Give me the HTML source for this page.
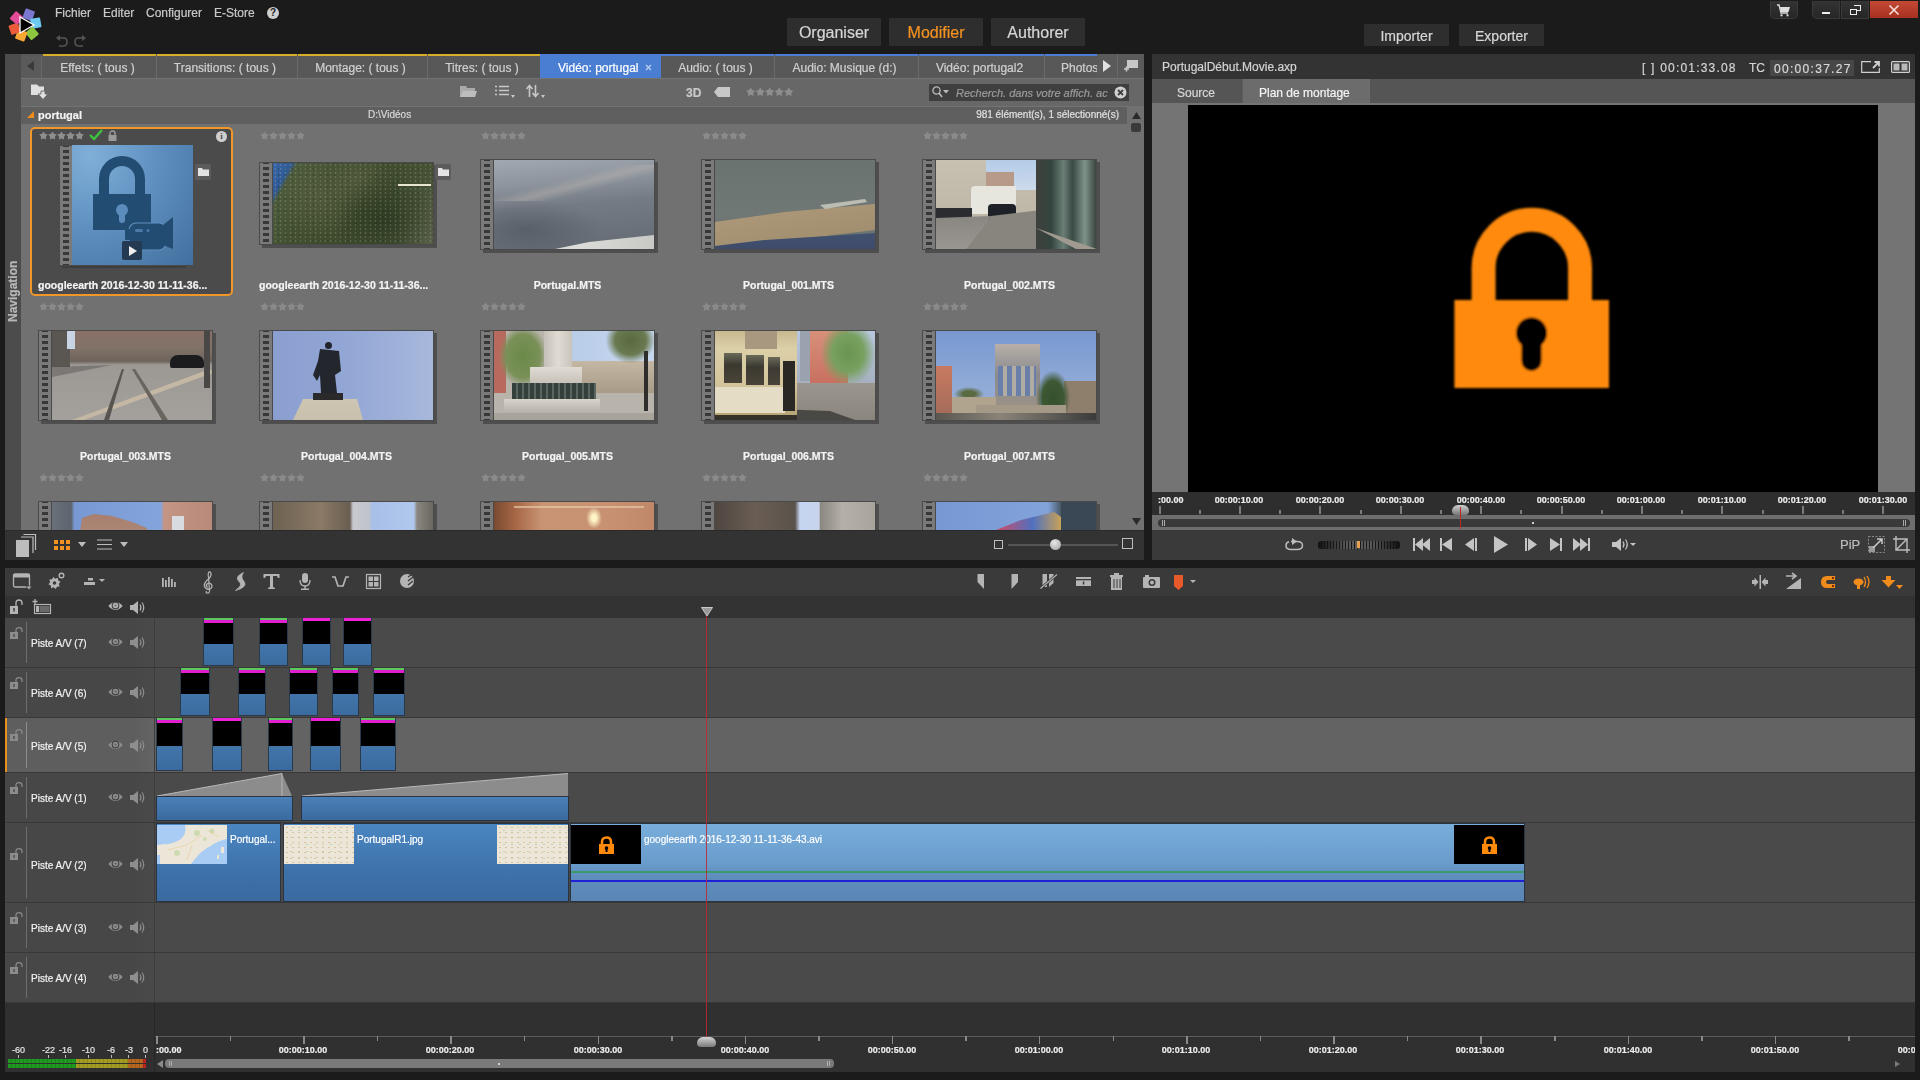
<!DOCTYPE html><html><head><meta charset="utf-8"><style>
*{margin:0;padding:0;box-sizing:border-box}
html,body{width:1920px;height:1080px;overflow:hidden;background:#1b1b1b;font-family:"Liberation Sans",sans-serif;}
div{position:absolute}
.t{white-space:nowrap;line-height:1;will-change:transform;-webkit-text-stroke:0.2px currentColor}
svg{position:absolute;overflow:visible}
</style></head><body>

<div style="left:0px;top:0px;width:1920px;height:54px;background:#1b1b1b"></div>
<svg style="left:0;top:0" width="60" height="54" viewBox="0 0 60 54">
<g transform="translate(25,25)">
<rect x="-5" y="-16" width="10" height="10" rx="1" fill="#7a78d0" transform="rotate(20)"/>
<rect x="-5" y="-16" width="10" height="10" rx="1" fill="#6ccaf0" transform="rotate(80)"/>
<rect x="-5" y="-16" width="10" height="10" rx="1" fill="#8cc63e" transform="rotate(140)"/>
<rect x="-5" y="-16" width="10" height="10" rx="1" fill="#f7a733" transform="rotate(200)"/>
<rect x="-5" y="-16" width="10" height="10" rx="1" fill="#ec5b3a" transform="rotate(250)"/>
<rect x="-5" y="-16" width="10" height="10" rx="1" fill="#e44c9a" transform="rotate(310)"/>
<path d="M-5,-8 L9,0 L-5,8 Z" fill="#000" stroke="#fff" stroke-width="1.3"/>
</g></svg>
<div class="t" style="left:55px;top:7px;font-size:12px;color:#c9c9c9">Fichier</div>
<div class="t" style="left:103px;top:7px;font-size:12px;color:#c9c9c9">Editer</div>
<div class="t" style="left:146px;top:7px;font-size:12px;color:#c9c9c9">Configurer</div>
<div class="t" style="left:214px;top:7px;font-size:12px;color:#c9c9c9">E-Store</div>
<div style="left:267px;top:7px;width:12px;height:12px;border-radius:6px;background:#d0d0d0;color:#1b1b1b;font-size:10px;font-weight:bold;text-align:center;line-height:12px">?</div>
<svg style="left:55px;top:34px" width="32" height="14" viewBox="0 0 32 14">
<path d="M3,4 L9,4 Q12,4 12,8 Q12,12 8,12 L4,12" fill="none" stroke="#555" stroke-width="1.6"/>
<path d="M1,4 L5,1 L5,7 Z" fill="#555"/>
<path d="M29,4 L23,4 Q20,4 20,8 Q20,12 24,12 L28,12" fill="none" stroke="#555" stroke-width="1.6"/>
<path d="M31,4 L27,1 L27,7 Z" fill="#555"/>
</svg>
<div style="left:787px;top:18px;width:94px;height:28px;background:#2e2e2e;border-radius:1px"></div><div class="t" style="left:787px;top:25px;width:94px;color:#d6d6d6;font-size:16px;text-align:center">Organiser</div>
<div style="left:889px;top:18px;width:94px;height:28px;background:#2e2e2e;border-radius:1px"></div><div class="t" style="left:889px;top:25px;width:94px;color:#f39220;font-size:16px;text-align:center">Modifier</div>
<div style="left:991px;top:18px;width:94px;height:28px;background:#2e2e2e;border-radius:1px"></div><div class="t" style="left:991px;top:25px;width:94px;color:#d6d6d6;font-size:16px;text-align:center">Authorer</div>
<div style="left:1364px;top:24px;width:85px;height:22px;background:#2e2e2e;border-radius:1px"></div><div class="t" style="left:1364px;top:29px;width:85px;color:#d6d6d6;font-size:14px;text-align:center">Importer</div>
<div style="left:1459px;top:24px;width:85px;height:22px;background:#2e2e2e;border-radius:1px"></div><div class="t" style="left:1459px;top:29px;width:85px;color:#d6d6d6;font-size:14px;text-align:center">Exporter</div>
<div style="left:1770px;top:1px;width:28px;height:18px;background:linear-gradient(#343434,#262626);border-radius:0 0 5px 5px;border:1px solid #3a3a3a;border-top:none"></div>
<svg style="left:1776px;top:4px" width="16" height="13" viewBox="0 0 16 13"><path d="M1,1 L3,1 L5,9 L12,9" fill="none" stroke="#ddd" stroke-width="1.3"/><path d="M4,3 L14,3 L12.5,8 L5,8Z" fill="#ddd"/><rect x="4.5" y="10.3" width="2" height="2" fill="#ddd"/><rect x="10.5" y="10.3" width="2" height="2" fill="#ddd"/></svg>
<div style="left:1812px;top:1px;width:28px;height:18px;background:linear-gradient(#343434,#262626);border-radius:0 0 0 5px;border:1px solid #3a3a3a;border-top:none"></div>
<div style="left:1822px;top:12px;width:8px;height:2px;background:#eee"></div>
<div style="left:1841px;top:1px;width:28px;height:18px;background:linear-gradient(#343434,#262626);border:1px solid #3a3a3a;border-top:none"></div>
<div style="left:1850px;top:9px;width:7px;height:6px;border:1.2px solid #eee;"></div><div style="left:1854px;top:5px;width:7px;height:6px;border:1.2px solid #eee;border-left:none;border-bottom:none"></div><div style="left:1857px;top:9px;width:4px;height:2px;border-right:1.2px solid #eee;border-bottom:1.2px solid #eee"></div>
<div style="left:1870px;top:1px;width:48px;height:17px;background:linear-gradient(#c44a36,#a8301f);"></div>
<svg style="left:1889px;top:5px" width="10" height="10" viewBox="0 0 10 10"><path d="M0.5,0.5 L9.5,9.5 M9.5,0.5 L0.5,9.5" stroke="#f4e4e0" stroke-width="1.5"/></svg>
<div style="left:5px;top:54px;width:1139px;height:476px;background:#717171"></div>
<div style="left:5px;top:54px;width:16px;height:476px;background:#4c4c4c"></div>
<div style="left:5px;top:322px;width:16px;height:0;"><div class="t" style="left:2px;top:0;transform:rotate(-90deg);transform-origin:0 0;font-size:12px;font-weight:bold;color:#b8b8b8">Navigation</div></div>
<div style="left:21px;top:54px;width:1123px;height:24px;background:#585858"></div>
<div style="left:21px;top:56px;width:21px;height:22px;background:#5a5a5a;border-right:1px solid #6a6a6a"></div>
<svg style="left:27px;top:61px" width="8" height="10"><path d="M7,0 L0,5 L7,10Z" fill="#3a3a3a"/></svg>
<div style="left:43px;top:54px;width:113px;height:2px;background:#d6ae2a"></div>
<div style="left:156px;top:56px;width:1px;height:22px;background:#6a6a6a"></div>
<div class="t" style="left:41px;top:62px;width:113px;text-align:center;font-size:12px;color:#d0d0d0">Effets: ( tous )</div>
<div style="left:157px;top:54px;width:140px;height:2px;background:#d6ae2a"></div>
<div style="left:297px;top:56px;width:1px;height:22px;background:#6a6a6a"></div>
<div class="t" style="left:155px;top:62px;width:140px;text-align:center;font-size:12px;color:#d0d0d0">Transitions: ( tous )</div>
<div style="left:298px;top:54px;width:129px;height:2px;background:#d6ae2a"></div>
<div style="left:427px;top:56px;width:1px;height:22px;background:#6a6a6a"></div>
<div class="t" style="left:296px;top:62px;width:129px;text-align:center;font-size:12px;color:#d0d0d0">Montage: ( tous )</div>
<div style="left:428px;top:54px;width:112px;height:2px;background:#d6ae2a"></div>
<div style="left:540px;top:56px;width:1px;height:22px;background:#6a6a6a"></div>
<div class="t" style="left:426px;top:62px;width:112px;text-align:center;font-size:12px;color:#d0d0d0">Titres: ( tous )</div>
<div style="left:540px;top:54px;width:121px;height:24px;background:#4a7ed2"></div>
<div class="t" style="left:558px;top:62px;font-size:12px;color:#fff">Vidéo: portugal</div>
<svg style="left:645px;top:64px" width="7" height="7"><path d="M1,1 L6,6 M6,1 L1,6" stroke="#b8ccf0" stroke-width="1.4"/></svg>
<div style="left:661px;top:54px;width:113px;height:2px;background:#4a7ed2"></div>
<div style="left:774px;top:56px;width:1px;height:22px;background:#6a6a6a"></div>
<div class="t" style="left:659px;top:62px;width:113px;text-align:center;font-size:12px;color:#d0d0d0">Audio: ( tous )</div>
<div style="left:775px;top:54px;width:143px;height:2px;background:#4a7ed2"></div>
<div style="left:918px;top:56px;width:1px;height:22px;background:#6a6a6a"></div>
<div class="t" style="left:773px;top:62px;width:143px;text-align:center;font-size:12px;color:#d0d0d0">Audio: Musique (d:)</div>
<div style="left:919px;top:54px;width:125px;height:2px;background:#4a7ed2"></div>
<div style="left:1044px;top:56px;width:1px;height:22px;background:#6a6a6a"></div>
<div class="t" style="left:917px;top:62px;width:125px;text-align:center;font-size:12px;color:#d0d0d0">Vidéo: portugal2</div>
<div style="left:1045px;top:54px;width:52px;height:2px;background:#4a7ed2"></div>
<div style="left:1045px;top:56px;width:52px;height:22px;overflow:hidden"><div class="t" style="left:16px;top:6px;font-size:12px;color:#d0d0d0">Photos</div></div>
<div style="left:1097px;top:54px;width:21px;height:24px;background:#5a5a5a;border-right:1px solid #6a6a6a"></div>
<svg style="left:1103px;top:60px" width="8" height="12"><path d="M0,0 L8,6 L0,12Z" fill="#e0e0e0"/></svg>
<div style="left:1119px;top:54px;width:25px;height:24px;background:#5a5a5a"></div>
<svg style="left:1123px;top:59px" width="16" height="14"><rect x="4" y="1" width="11" height="8" fill="#c8c8c8"/><path d="M1,10 L6,10 M3.5,7.5 L3.5,12.5" stroke="#c8c8c8" stroke-width="1.6"/></svg>
<div style="left:21px;top:78px;width:1123px;height:28px;background:#676767;border-top:1px solid #747474"></div>
<svg style="left:31px;top:84px" width="20" height="17"><path d="M0,0.5 L6,0.5 L8,2.5 L13,2.5 L13,11 L0,11Z" fill="#e0e0e0"/><path d="M10,7 L14,7 L14,10 L17,10 L12,15.5 L7,10 L10,10Z" fill="#e0e0e0" stroke="#676767" stroke-width="0.9"/></svg>
<svg style="left:460px;top:85px" width="17" height="13"><path d="M0,1 L6,1 L7,3 L15,3 L15,12 L0,12Z" fill="#aaa"/><path d="M0,12 L3,6 L17,6 L15,12Z" fill="#bdbdbd"/></svg>
<svg style="left:495px;top:85px" width="22" height="14"><path d="M0,1.5 H2 M0,5.5 H2 M0,9.5 H2 M4,1.5 H14 M4,5.5 H14 M4,9.5 H14" stroke="#c8c8c8" stroke-width="1.6"/><path d="M16,10 L20,10 L18,13Z" fill="#c8c8c8"/></svg>
<svg style="left:526px;top:84px" width="22" height="15"><path d="M3.5,13 V2 M0.5,5 L3.5,1.5 L6.5,5 M9.5,1 V12 M6.5,9 L9.5,12.5 L12.5,9" stroke="#c8c8c8" stroke-width="1.6" fill="none"/><path d="M15,11 L19,11 L17,14Z" fill="#c8c8c8"/></svg>
<div class="t" style="left:686px;top:87px;font-size:12px;font-weight:bold;color:#c8c8c8">3D</div>
<svg style="left:714px;top:87px" width="17" height="10"><path d="M4,0 L16,0 L16,10 L4,10 L0,5Z" fill="#c8c8c8"/></svg>
<svg style="left:746px;top:87px" width="47.5" height="10.5"><polygon transform="translate(0.0,0)" points="4.75,0.40 6.31,3.00 9.27,3.68 7.28,5.97 7.54,8.99 4.75,7.81 1.96,8.99 2.22,5.97 0.23,3.68 3.19,3.00" fill="#8e8e8e"/><polygon transform="translate(9.5,0)" points="4.75,0.40 6.31,3.00 9.27,3.68 7.28,5.97 7.54,8.99 4.75,7.81 1.96,8.99 2.22,5.97 0.23,3.68 3.19,3.00" fill="#8e8e8e"/><polygon transform="translate(19.0,0)" points="4.75,0.40 6.31,3.00 9.27,3.68 7.28,5.97 7.54,8.99 4.75,7.81 1.96,8.99 2.22,5.97 0.23,3.68 3.19,3.00" fill="#8e8e8e"/><polygon transform="translate(28.5,0)" points="4.75,0.40 6.31,3.00 9.27,3.68 7.28,5.97 7.54,8.99 4.75,7.81 1.96,8.99 2.22,5.97 0.23,3.68 3.19,3.00" fill="#8e8e8e"/><polygon transform="translate(38.0,0)" points="4.75,0.40 6.31,3.00 9.27,3.68 7.28,5.97 7.54,8.99 4.75,7.81 1.96,8.99 2.22,5.97 0.23,3.68 3.19,3.00" fill="#8e8e8e"/></svg>
<div style="left:929px;top:84px;width:200px;height:17px;background:#3f3f3f"></div>
<svg style="left:932px;top:86px" width="18" height="13"><circle cx="4.5" cy="4.5" r="3.6" fill="none" stroke="#bbb" stroke-width="1.3"/><path d="M7,7 L10,11" stroke="#bbb" stroke-width="1.6"/><path d="M11,4 L17,4 L14,7.5Z" fill="#bbb"/></svg>
<div class="t" style="left:956px;top:88px;font-size:11px;font-style:italic;color:#9c9c9c">Recherch. dans votre affich. ac</div>
<svg style="left:1114px;top:86px" width="13" height="13"><circle cx="6.5" cy="6.5" r="6" fill="#d0d0d0"/><path d="M4,4 L9,9 M9,4 L4,9" stroke="#3f3f3f" stroke-width="1.8"/></svg>
<div style="left:21px;top:106px;width:1106px;height:18px;background:#5f5f5f;border-top:1px solid #737373"></div>
<svg style="left:27px;top:111px" width="7" height="8"><path d="M7,0 L7,7 L0,7Z" fill="#f08c1c"/></svg>
<div class="t" style="left:38px;top:110px;font-size:11px;font-weight:bold;color:#f2f2f2">portugal</div>
<div class="t" style="left:368px;top:110px;font-size:10px;color:#d8d8d8">D:\Vidéos</div>
<div class="t" style="left:900px;top:110px;width:219px;text-align:right;font-size:10px;color:#e0e0e0">981 élément(s), 1 sélectionné(s)</div>
<svg style="left:1132px;top:112px" width="9" height="7"><path d="M4.5,0 L9,7 L0,7Z" fill="#2a2a2a"/></svg>
<div style="left:1131px;top:123px;width:10px;height:9px;background:#3a3a3a;border-radius:2px"></div>
<svg style="left:1132px;top:518px" width="9" height="7"><path d="M0,0 L9,0 L4.5,7Z" fill="#2a2a2a"/></svg>
<div style="left:30px;top:127px;width:203px;height:169px;border:2px solid #f0962a;border-radius:5px;background:#4b4b4b"></div>
<svg style="left:38.5px;top:130.5px" width="45" height="10"><polygon transform="translate(0,0)" points="4.50,0.40 5.98,2.86 8.78,3.51 6.90,5.68 7.15,8.54 4.50,7.42 1.85,8.54 2.10,5.68 0.22,3.51 3.02,2.86" fill="#8e8e8e"/><polygon transform="translate(9,0)" points="4.50,0.40 5.98,2.86 8.78,3.51 6.90,5.68 7.15,8.54 4.50,7.42 1.85,8.54 2.10,5.68 0.22,3.51 3.02,2.86" fill="#8e8e8e"/><polygon transform="translate(18,0)" points="4.50,0.40 5.98,2.86 8.78,3.51 6.90,5.68 7.15,8.54 4.50,7.42 1.85,8.54 2.10,5.68 0.22,3.51 3.02,2.86" fill="#8e8e8e"/><polygon transform="translate(27,0)" points="4.50,0.40 5.98,2.86 8.78,3.51 6.90,5.68 7.15,8.54 4.50,7.42 1.85,8.54 2.10,5.68 0.22,3.51 3.02,2.86" fill="#8e8e8e"/><polygon transform="translate(36,0)" points="4.50,0.40 5.98,2.86 8.78,3.51 6.90,5.68 7.15,8.54 4.50,7.42 1.85,8.54 2.10,5.68 0.22,3.51 3.02,2.86" fill="#8e8e8e"/></svg>
<svg style="left:259.5px;top:130.5px" width="45" height="10"><polygon transform="translate(0,0)" points="4.50,0.40 5.98,2.86 8.78,3.51 6.90,5.68 7.15,8.54 4.50,7.42 1.85,8.54 2.10,5.68 0.22,3.51 3.02,2.86" fill="#8a8a8a"/><polygon transform="translate(9,0)" points="4.50,0.40 5.98,2.86 8.78,3.51 6.90,5.68 7.15,8.54 4.50,7.42 1.85,8.54 2.10,5.68 0.22,3.51 3.02,2.86" fill="#8a8a8a"/><polygon transform="translate(18,0)" points="4.50,0.40 5.98,2.86 8.78,3.51 6.90,5.68 7.15,8.54 4.50,7.42 1.85,8.54 2.10,5.68 0.22,3.51 3.02,2.86" fill="#8a8a8a"/><polygon transform="translate(27,0)" points="4.50,0.40 5.98,2.86 8.78,3.51 6.90,5.68 7.15,8.54 4.50,7.42 1.85,8.54 2.10,5.68 0.22,3.51 3.02,2.86" fill="#8a8a8a"/><polygon transform="translate(36,0)" points="4.50,0.40 5.98,2.86 8.78,3.51 6.90,5.68 7.15,8.54 4.50,7.42 1.85,8.54 2.10,5.68 0.22,3.51 3.02,2.86" fill="#8a8a8a"/></svg>
<svg style="left:480.5px;top:130.5px" width="45" height="10"><polygon transform="translate(0,0)" points="4.50,0.40 5.98,2.86 8.78,3.51 6.90,5.68 7.15,8.54 4.50,7.42 1.85,8.54 2.10,5.68 0.22,3.51 3.02,2.86" fill="#8a8a8a"/><polygon transform="translate(9,0)" points="4.50,0.40 5.98,2.86 8.78,3.51 6.90,5.68 7.15,8.54 4.50,7.42 1.85,8.54 2.10,5.68 0.22,3.51 3.02,2.86" fill="#8a8a8a"/><polygon transform="translate(18,0)" points="4.50,0.40 5.98,2.86 8.78,3.51 6.90,5.68 7.15,8.54 4.50,7.42 1.85,8.54 2.10,5.68 0.22,3.51 3.02,2.86" fill="#8a8a8a"/><polygon transform="translate(27,0)" points="4.50,0.40 5.98,2.86 8.78,3.51 6.90,5.68 7.15,8.54 4.50,7.42 1.85,8.54 2.10,5.68 0.22,3.51 3.02,2.86" fill="#8a8a8a"/><polygon transform="translate(36,0)" points="4.50,0.40 5.98,2.86 8.78,3.51 6.90,5.68 7.15,8.54 4.50,7.42 1.85,8.54 2.10,5.68 0.22,3.51 3.02,2.86" fill="#8a8a8a"/></svg>
<div style="left:483px;top:162px;width:175px;height:91px;background:#4e4e4e"></div>
<div style="left:480px;top:159px;width:175px;height:91px;background:#4a4a4a"></div>
<div style="left:481px;top:160px;width:12px;height:89px;background:#7a7a7a;background-image:repeating-linear-gradient(#7a7a7a 0 2px,#383838 2px 5px,#7a7a7a 5px 6px);background-size:6px 6px;background-repeat:repeat-y;background-position:3px 2px"></div>
<div style="left:494px;top:160px;width:160px;height:89px;overflow:hidden"><div style="left:0;top:0;width:100%;height:100%;background:linear-gradient(175deg,#a2a8b0 0%,#8e959e 25%,#747b84 50%,#636a73 100%)"></div><div style="left:-20px;top:5px;width:220px;height:36px;background:linear-gradient(165deg,transparent 40%,rgba(185,180,175,.45) 50%,transparent 60%)"></div><div style="left:0px;top:40px;width:110px;height:49px;background:radial-gradient(ellipse at 30% 60%,rgba(70,76,84,.5),transparent 70%)"></div><div style="left:0px;top:0px;width:161px;height:89px;clip-path:polygon(61px 89px,95px 82px,161px 75px,161px 89px);background:linear-gradient(90deg,#c8c8c8,#dcdcd8 50%,#c8c8c4)"></div></div>
<div class="t" style="left:480px;top:280px;width:175px;text-align:center;font-size:10.5px;font-weight:bold;color:#f4f4f4">Portugal.MTS</div>
<svg style="left:701.5px;top:130.5px" width="45" height="10"><polygon transform="translate(0,0)" points="4.50,0.40 5.98,2.86 8.78,3.51 6.90,5.68 7.15,8.54 4.50,7.42 1.85,8.54 2.10,5.68 0.22,3.51 3.02,2.86" fill="#8a8a8a"/><polygon transform="translate(9,0)" points="4.50,0.40 5.98,2.86 8.78,3.51 6.90,5.68 7.15,8.54 4.50,7.42 1.85,8.54 2.10,5.68 0.22,3.51 3.02,2.86" fill="#8a8a8a"/><polygon transform="translate(18,0)" points="4.50,0.40 5.98,2.86 8.78,3.51 6.90,5.68 7.15,8.54 4.50,7.42 1.85,8.54 2.10,5.68 0.22,3.51 3.02,2.86" fill="#8a8a8a"/><polygon transform="translate(27,0)" points="4.50,0.40 5.98,2.86 8.78,3.51 6.90,5.68 7.15,8.54 4.50,7.42 1.85,8.54 2.10,5.68 0.22,3.51 3.02,2.86" fill="#8a8a8a"/><polygon transform="translate(36,0)" points="4.50,0.40 5.98,2.86 8.78,3.51 6.90,5.68 7.15,8.54 4.50,7.42 1.85,8.54 2.10,5.68 0.22,3.51 3.02,2.86" fill="#8a8a8a"/></svg>
<div style="left:704px;top:162px;width:175px;height:91px;background:#4e4e4e"></div>
<div style="left:701px;top:159px;width:175px;height:91px;background:#4a4a4a"></div>
<div style="left:702px;top:160px;width:12px;height:89px;background:#7a7a7a;background-image:repeating-linear-gradient(#7a7a7a 0 2px,#383838 2px 5px,#7a7a7a 5px 6px);background-size:6px 6px;background-repeat:repeat-y;background-position:3px 2px"></div>
<div style="left:715px;top:160px;width:160px;height:89px;overflow:hidden"><div style="left:0;top:0;width:100%;height:100%;background:linear-gradient(#6a7370,#707876 60%,#6a726e)"></div><div style="left:0px;top:0px;width:161px;height:89px;clip-path:polygon(0px 62px,70px 52px,161px 44px,161px 70px,60px 82px,0px 88px);background:linear-gradient(170deg,#9a8e76,#ac9878 50%,#9c8a6c)"></div><div style="left:0px;top:0px;width:161px;height:89px;clip-path:polygon(105px 45px,150px 39px,152px 42px,110px 49px);background:rgba(220,220,205,.7)"></div><div style="left:0px;top:0px;width:161px;height:89px;clip-path:polygon(0px 89px,0px 86px,50px 80px,161px 73px,161px 89px);background:linear-gradient(#56688a,#3e4c6a)"></div></div>
<div class="t" style="left:701px;top:280px;width:175px;text-align:center;font-size:10.5px;font-weight:bold;color:#f4f4f4">Portugal_001.MTS</div>
<svg style="left:922.5px;top:130.5px" width="45" height="10"><polygon transform="translate(0,0)" points="4.50,0.40 5.98,2.86 8.78,3.51 6.90,5.68 7.15,8.54 4.50,7.42 1.85,8.54 2.10,5.68 0.22,3.51 3.02,2.86" fill="#8a8a8a"/><polygon transform="translate(9,0)" points="4.50,0.40 5.98,2.86 8.78,3.51 6.90,5.68 7.15,8.54 4.50,7.42 1.85,8.54 2.10,5.68 0.22,3.51 3.02,2.86" fill="#8a8a8a"/><polygon transform="translate(18,0)" points="4.50,0.40 5.98,2.86 8.78,3.51 6.90,5.68 7.15,8.54 4.50,7.42 1.85,8.54 2.10,5.68 0.22,3.51 3.02,2.86" fill="#8a8a8a"/><polygon transform="translate(27,0)" points="4.50,0.40 5.98,2.86 8.78,3.51 6.90,5.68 7.15,8.54 4.50,7.42 1.85,8.54 2.10,5.68 0.22,3.51 3.02,2.86" fill="#8a8a8a"/><polygon transform="translate(36,0)" points="4.50,0.40 5.98,2.86 8.78,3.51 6.90,5.68 7.15,8.54 4.50,7.42 1.85,8.54 2.10,5.68 0.22,3.51 3.02,2.86" fill="#8a8a8a"/></svg>
<div style="left:925px;top:162px;width:175px;height:91px;background:#4e4e4e"></div>
<div style="left:922px;top:159px;width:175px;height:91px;background:#4a4a4a"></div>
<div style="left:923px;top:160px;width:12px;height:89px;background:#7a7a7a;background-image:repeating-linear-gradient(#7a7a7a 0 2px,#383838 2px 5px,#7a7a7a 5px 6px);background-size:6px 6px;background-repeat:repeat-y;background-position:3px 2px"></div>
<div style="left:936px;top:160px;width:160px;height:89px;overflow:hidden"><div style="left:0;top:0;width:100%;height:100%;background:linear-gradient(#c8c0b0,#b8b0a0)"></div><div style="left:50px;top:0px;width:55px;height:30px;background:linear-gradient(#b4cce8,#ccdaec)"></div><div style="left:50px;top:12px;width:28px;height:28px;background:#b89a88"></div><div style="left:35px;top:26px;width:45px;height:28px;background:#e6e6de;border-radius:4px 0 0 0"></div><div style="left:52px;top:44px;width:28px;height:18px;background:#1e2228;border-radius:4px"></div><div style="left:0px;top:48px;width:36px;height:10px;background:#2a2c30"></div><div style="left:0px;top:0px;width:161px;height:89px;clip-path:polygon(0px 58px,55px 56px,30px 89px,0px 89px);background:linear-gradient(#6e6c68,#9a9690)"></div><div style="left:0px;top:0px;width:161px;height:89px;clip-path:polygon(55px 56px,105px 50px,150px 89px,30px 89px);background:#88847e"></div><div style="left:100px;top:0px;width:61px;height:89px;background:linear-gradient(90deg,#3e403c,#34443e 25%,#6a7e76 45%,#3a4a44 60%,#7e928a 80%,#34403a)"></div><div style="left:0px;top:0px;width:161px;height:89px;clip-path:polygon(100px 68px,161px 89px,140px 89px);background:#a09a90"></div></div>
<div class="t" style="left:922px;top:280px;width:175px;text-align:center;font-size:10.5px;font-weight:bold;color:#f4f4f4">Portugal_002.MTS</div>
<svg style="left:38.5px;top:301.5px" width="45" height="10"><polygon transform="translate(0,0)" points="4.50,0.40 5.98,2.86 8.78,3.51 6.90,5.68 7.15,8.54 4.50,7.42 1.85,8.54 2.10,5.68 0.22,3.51 3.02,2.86" fill="#8a8a8a"/><polygon transform="translate(9,0)" points="4.50,0.40 5.98,2.86 8.78,3.51 6.90,5.68 7.15,8.54 4.50,7.42 1.85,8.54 2.10,5.68 0.22,3.51 3.02,2.86" fill="#8a8a8a"/><polygon transform="translate(18,0)" points="4.50,0.40 5.98,2.86 8.78,3.51 6.90,5.68 7.15,8.54 4.50,7.42 1.85,8.54 2.10,5.68 0.22,3.51 3.02,2.86" fill="#8a8a8a"/><polygon transform="translate(27,0)" points="4.50,0.40 5.98,2.86 8.78,3.51 6.90,5.68 7.15,8.54 4.50,7.42 1.85,8.54 2.10,5.68 0.22,3.51 3.02,2.86" fill="#8a8a8a"/><polygon transform="translate(36,0)" points="4.50,0.40 5.98,2.86 8.78,3.51 6.90,5.68 7.15,8.54 4.50,7.42 1.85,8.54 2.10,5.68 0.22,3.51 3.02,2.86" fill="#8a8a8a"/></svg>
<div style="left:41px;top:333px;width:175px;height:91px;background:#4e4e4e"></div>
<div style="left:38px;top:330px;width:175px;height:91px;background:#4a4a4a"></div>
<div style="left:39px;top:331px;width:12px;height:89px;background:#7a7a7a;background-image:repeating-linear-gradient(#7a7a7a 0 2px,#383838 2px 5px,#7a7a7a 5px 6px);background-size:6px 6px;background-repeat:repeat-y;background-position:3px 2px"></div>
<div style="left:52px;top:331px;width:160px;height:89px;overflow:hidden"><div style="left:0;top:0;width:100%;height:100%;background:linear-gradient(#8a7068 0%,#807268 20%,#6e645c 34%,#9c9894 38%,#a4a09c 100%)"></div><div style="left:0px;top:0px;width:18px;height:36px;background:#5a5652"></div><div style="left:15px;top:0px;width:8px;height:18px;background:#c8d4e4"></div><div style="left:0px;top:0px;width:161px;height:89px;clip-path:polygon(0px 36px,60px 34px,0px 46px);background:rgba(60,60,60,.35)"></div><div style="left:0px;top:0px;width:161px;height:89px;clip-path:polygon(20px 89px,158px 38px,161px 42px,32px 89px);background:#c4b8a4"></div><div style="left:0px;top:0px;width:161px;height:89px;clip-path:polygon(52px 89px,70px 38px,72px 38px,57px 89px);background:#5a5450"></div><div style="left:0px;top:0px;width:161px;height:89px;clip-path:polygon(110px 89px,80px 38px,83px 38px,116px 89px);background:#6a645e"></div><div style="left:118px;top:24px;width:34px;height:13px;background:#1c1c1e;border-radius:8px 8px 2px 2px"></div><div style="left:152px;top:0px;width:6px;height:57px;background:#4a4846"></div></div>
<div class="t" style="left:38px;top:451px;width:175px;text-align:center;font-size:10.5px;font-weight:bold;color:#f4f4f4">Portugal_003.MTS</div>
<svg style="left:259.5px;top:301.5px" width="45" height="10"><polygon transform="translate(0,0)" points="4.50,0.40 5.98,2.86 8.78,3.51 6.90,5.68 7.15,8.54 4.50,7.42 1.85,8.54 2.10,5.68 0.22,3.51 3.02,2.86" fill="#8a8a8a"/><polygon transform="translate(9,0)" points="4.50,0.40 5.98,2.86 8.78,3.51 6.90,5.68 7.15,8.54 4.50,7.42 1.85,8.54 2.10,5.68 0.22,3.51 3.02,2.86" fill="#8a8a8a"/><polygon transform="translate(18,0)" points="4.50,0.40 5.98,2.86 8.78,3.51 6.90,5.68 7.15,8.54 4.50,7.42 1.85,8.54 2.10,5.68 0.22,3.51 3.02,2.86" fill="#8a8a8a"/><polygon transform="translate(27,0)" points="4.50,0.40 5.98,2.86 8.78,3.51 6.90,5.68 7.15,8.54 4.50,7.42 1.85,8.54 2.10,5.68 0.22,3.51 3.02,2.86" fill="#8a8a8a"/><polygon transform="translate(36,0)" points="4.50,0.40 5.98,2.86 8.78,3.51 6.90,5.68 7.15,8.54 4.50,7.42 1.85,8.54 2.10,5.68 0.22,3.51 3.02,2.86" fill="#8a8a8a"/></svg>
<div style="left:262px;top:333px;width:175px;height:91px;background:#4e4e4e"></div>
<div style="left:259px;top:330px;width:175px;height:91px;background:#4a4a4a"></div>
<div style="left:260px;top:331px;width:12px;height:89px;background:#7a7a7a;background-image:repeating-linear-gradient(#7a7a7a 0 2px,#383838 2px 5px,#7a7a7a 5px 6px);background-size:6px 6px;background-repeat:repeat-y;background-position:3px 2px"></div>
<div style="left:273px;top:331px;width:160px;height:89px;overflow:hidden"><div style="left:0;top:0;width:100%;height:100%;background:linear-gradient(90deg,#8a9ed0 0%,#94a8d6 50%,#a8b8dc 100%)"></div><div style="left:52px;top:11px;width:7px;height:7px;background:#22242c;border-radius:4px"></div><div style="left:0px;top:0px;width:161px;height:89px;clip-path:polygon(47px 18px,66px 20px,68px 40px,62px 44px,64px 62px,48px 62px,47px 44px,44px 50px,40px 44px,45px 30px);background:#24262e"></div><div style="left:0px;top:0px;width:161px;height:89px;clip-path:polygon(20px 89px,30px 68px,84px 68px,90px 89px);background:linear-gradient(#e0d8c8,#c8c0ac)"></div><div style="left:40px;top:62px;width:30px;height:7px;background:#2a2a2a"></div></div>
<div class="t" style="left:259px;top:451px;width:175px;text-align:center;font-size:10.5px;font-weight:bold;color:#f4f4f4">Portugal_004.MTS</div>
<svg style="left:480.5px;top:301.5px" width="45" height="10"><polygon transform="translate(0,0)" points="4.50,0.40 5.98,2.86 8.78,3.51 6.90,5.68 7.15,8.54 4.50,7.42 1.85,8.54 2.10,5.68 0.22,3.51 3.02,2.86" fill="#8a8a8a"/><polygon transform="translate(9,0)" points="4.50,0.40 5.98,2.86 8.78,3.51 6.90,5.68 7.15,8.54 4.50,7.42 1.85,8.54 2.10,5.68 0.22,3.51 3.02,2.86" fill="#8a8a8a"/><polygon transform="translate(18,0)" points="4.50,0.40 5.98,2.86 8.78,3.51 6.90,5.68 7.15,8.54 4.50,7.42 1.85,8.54 2.10,5.68 0.22,3.51 3.02,2.86" fill="#8a8a8a"/><polygon transform="translate(27,0)" points="4.50,0.40 5.98,2.86 8.78,3.51 6.90,5.68 7.15,8.54 4.50,7.42 1.85,8.54 2.10,5.68 0.22,3.51 3.02,2.86" fill="#8a8a8a"/><polygon transform="translate(36,0)" points="4.50,0.40 5.98,2.86 8.78,3.51 6.90,5.68 7.15,8.54 4.50,7.42 1.85,8.54 2.10,5.68 0.22,3.51 3.02,2.86" fill="#8a8a8a"/></svg>
<div style="left:483px;top:333px;width:175px;height:91px;background:#4e4e4e"></div>
<div style="left:480px;top:330px;width:175px;height:91px;background:#4a4a4a"></div>
<div style="left:481px;top:331px;width:12px;height:89px;background:#7a7a7a;background-image:repeating-linear-gradient(#7a7a7a 0 2px,#383838 2px 5px,#7a7a7a 5px 6px);background-size:6px 6px;background-repeat:repeat-y;background-position:3px 2px"></div>
<div style="left:494px;top:331px;width:160px;height:89px;overflow:hidden"><div style="left:0;top:0;width:100%;height:100%;background:#b8b4ac"></div><div style="left:75px;top:0px;width:86px;height:33px;background:linear-gradient(90deg,#b8cce8,#c8d8f0)"></div><div style="left:78px;top:30px;width:83px;height:32px;background:linear-gradient(#c4b8a4,#a89c88)"></div><div style="left:0px;top:0px;width:12px;height:62px;background:#b86a5e"></div><div style="left:5px;top:0px;width:48px;height:56px;background:radial-gradient(ellipse at 50% 45%,#6a8a48 0%,#7a9058 50%,rgba(120,140,90,0) 72%)"></div><div style="left:112px;top:0px;width:49px;height:32px;background:radial-gradient(ellipse at 50% 30%,#586840 0%,#6a7a50 45%,rgba(100,110,80,0) 72%)"></div><div style="left:50px;top:0px;width:28px;height:38px;background:linear-gradient(90deg,#c4c0b8,#e0dcd4,#c8c4bc)"></div><div style="left:36px;top:36px;width:52px;height:20px;background:linear-gradient(#e0dcd4,#c0bcb4)"></div><div style="left:18px;top:52px;width:84px;height:16px;background:repeating-linear-gradient(90deg,#34403c 0 4px,#5a6660 4px 6px)"></div><div style="left:10px;top:68px;width:96px;height:14px;background:linear-gradient(#d8d4cc,#b4b0a8)"></div><div style="left:150px;top:20px;width:4px;height:60px;background:#2e2e2c"></div><div style="left:0px;top:82px;width:161px;height:7px;background:#a8a49c"></div></div>
<div class="t" style="left:480px;top:451px;width:175px;text-align:center;font-size:10.5px;font-weight:bold;color:#f4f4f4">Portugal_005.MTS</div>
<svg style="left:701.5px;top:301.5px" width="45" height="10"><polygon transform="translate(0,0)" points="4.50,0.40 5.98,2.86 8.78,3.51 6.90,5.68 7.15,8.54 4.50,7.42 1.85,8.54 2.10,5.68 0.22,3.51 3.02,2.86" fill="#8a8a8a"/><polygon transform="translate(9,0)" points="4.50,0.40 5.98,2.86 8.78,3.51 6.90,5.68 7.15,8.54 4.50,7.42 1.85,8.54 2.10,5.68 0.22,3.51 3.02,2.86" fill="#8a8a8a"/><polygon transform="translate(18,0)" points="4.50,0.40 5.98,2.86 8.78,3.51 6.90,5.68 7.15,8.54 4.50,7.42 1.85,8.54 2.10,5.68 0.22,3.51 3.02,2.86" fill="#8a8a8a"/><polygon transform="translate(27,0)" points="4.50,0.40 5.98,2.86 8.78,3.51 6.90,5.68 7.15,8.54 4.50,7.42 1.85,8.54 2.10,5.68 0.22,3.51 3.02,2.86" fill="#8a8a8a"/><polygon transform="translate(36,0)" points="4.50,0.40 5.98,2.86 8.78,3.51 6.90,5.68 7.15,8.54 4.50,7.42 1.85,8.54 2.10,5.68 0.22,3.51 3.02,2.86" fill="#8a8a8a"/></svg>
<div style="left:704px;top:333px;width:175px;height:91px;background:#4e4e4e"></div>
<div style="left:701px;top:330px;width:175px;height:91px;background:#4a4a4a"></div>
<div style="left:702px;top:331px;width:12px;height:89px;background:#7a7a7a;background-image:repeating-linear-gradient(#7a7a7a 0 2px,#383838 2px 5px,#7a7a7a 5px 6px);background-size:6px 6px;background-repeat:repeat-y;background-position:3px 2px"></div>
<div style="left:715px;top:331px;width:160px;height:89px;overflow:hidden"><div style="left:0;top:0;width:100%;height:100%;background:linear-gradient(#b8c8e0,#9aa0a8)"></div><div style="left:58px;top:0px;width:22px;height:48px;background:#dcdcdc"></div><div style="left:85px;top:0px;width:14px;height:50px;background:#9aa2b0"></div><div style="left:95px;top:0px;width:38px;height:52px;background:linear-gradient(#d8907a,#c87060)"></div><div style="left:105px;top:0px;width:56px;height:55px;background:radial-gradient(ellipse at 50% 40%,#6a9450 0%,#78a060 40%,rgba(120,150,90,0) 70%)"></div><div style="left:80px;top:52px;width:81px;height:37px;background:linear-gradient(#9a968e,#8a867e)"></div><div style="left:0px;top:0px;width:161px;height:89px;clip-path:polygon(30px 89px,60px 78px,115px 80px,140px 89px);background:#4a4844"></div><div style="left:0px;top:0px;width:82px;height:89px;background:linear-gradient(#c8b890,#dcd0a8 20%,#d4c49c 60%,#b4a070)"></div><div style="left:30px;top:0px;width:32px;height:18px;background:#a89880"></div><div style="left:9px;top:22px;width:18px;height:30px;background:linear-gradient(#6a6a5a,#3a3830 40%,#4a4438)"></div><div style="left:31px;top:24px;width:18px;height:30px;background:linear-gradient(#6a6a5a,#3a3830 40%,#4a4438)"></div><div style="left:53px;top:26px;width:12px;height:28px;background:linear-gradient(#6a6a5a,#3e3a34 40%,#4a4438)"></div><div style="left:0px;top:56px;width:70px;height:26px;background:#e4dcc4"></div><div style="left:68px;top:30px;width:12px;height:50px;background:#2a2824"></div><div style="left:0px;top:84px;width:82px;height:5px;background:#34302a"></div></div>
<div class="t" style="left:701px;top:451px;width:175px;text-align:center;font-size:10.5px;font-weight:bold;color:#f4f4f4">Portugal_006.MTS</div>
<svg style="left:922.5px;top:301.5px" width="45" height="10"><polygon transform="translate(0,0)" points="4.50,0.40 5.98,2.86 8.78,3.51 6.90,5.68 7.15,8.54 4.50,7.42 1.85,8.54 2.10,5.68 0.22,3.51 3.02,2.86" fill="#8a8a8a"/><polygon transform="translate(9,0)" points="4.50,0.40 5.98,2.86 8.78,3.51 6.90,5.68 7.15,8.54 4.50,7.42 1.85,8.54 2.10,5.68 0.22,3.51 3.02,2.86" fill="#8a8a8a"/><polygon transform="translate(18,0)" points="4.50,0.40 5.98,2.86 8.78,3.51 6.90,5.68 7.15,8.54 4.50,7.42 1.85,8.54 2.10,5.68 0.22,3.51 3.02,2.86" fill="#8a8a8a"/><polygon transform="translate(27,0)" points="4.50,0.40 5.98,2.86 8.78,3.51 6.90,5.68 7.15,8.54 4.50,7.42 1.85,8.54 2.10,5.68 0.22,3.51 3.02,2.86" fill="#8a8a8a"/><polygon transform="translate(36,0)" points="4.50,0.40 5.98,2.86 8.78,3.51 6.90,5.68 7.15,8.54 4.50,7.42 1.85,8.54 2.10,5.68 0.22,3.51 3.02,2.86" fill="#8a8a8a"/></svg>
<div style="left:925px;top:333px;width:175px;height:91px;background:#4e4e4e"></div>
<div style="left:922px;top:330px;width:175px;height:91px;background:#4a4a4a"></div>
<div style="left:923px;top:331px;width:12px;height:89px;background:#7a7a7a;background-image:repeating-linear-gradient(#7a7a7a 0 2px,#383838 2px 5px,#7a7a7a 5px 6px);background-size:6px 6px;background-repeat:repeat-y;background-position:3px 2px"></div>
<div style="left:936px;top:331px;width:160px;height:89px;overflow:hidden"><div style="left:0;top:0;width:100%;height:100%;background:linear-gradient(#7898d0,#90aad6 60%,#9ab0d8)"></div><div style="left:59px;top:13px;width:45px;height:62px;background:linear-gradient(#b8b0a8,#8a8a8e 50%,#9a9288)"></div><div style="left:62px;top:35px;width:38px;height:30px;background:repeating-linear-gradient(90deg,#6a7eaa 0 5px,#b0aca4 5px 9px)"></div><div style="left:0px;top:35px;width:16px;height:54px;background:linear-gradient(#c87a60,#a06a5a)"></div><div style="left:18px;top:56px;width:30px;height:14px;background:radial-gradient(ellipse,#5a6a40 30%,rgba(90,106,64,0) 72%)"></div><div style="left:16px;top:66px;width:44px;height:23px;background:#b0a48e"></div><div style="left:128px;top:50px;width:33px;height:39px;background:#8e7e6c"></div><div style="left:100px;top:40px;width:34px;height:49px;background:radial-gradient(ellipse at 50% 55%,#34502c 0%,#3e5834 45%,rgba(60,85,50,0) 72%)"></div><div style="left:40px;top:74px;width:90px;height:15px;background:#a49886"></div><div style="left:0px;top:82px;width:161px;height:7px;background:linear-gradient(90deg,#5a5650,#8a8478 40%,#3a3a3a)"></div></div>
<div class="t" style="left:922px;top:451px;width:175px;text-align:center;font-size:10.5px;font-weight:bold;color:#f4f4f4">Portugal_007.MTS</div>
<svg style="left:38.5px;top:472.5px" width="45" height="10"><polygon transform="translate(0,0)" points="4.50,0.40 5.98,2.86 8.78,3.51 6.90,5.68 7.15,8.54 4.50,7.42 1.85,8.54 2.10,5.68 0.22,3.51 3.02,2.86" fill="#8a8a8a"/><polygon transform="translate(9,0)" points="4.50,0.40 5.98,2.86 8.78,3.51 6.90,5.68 7.15,8.54 4.50,7.42 1.85,8.54 2.10,5.68 0.22,3.51 3.02,2.86" fill="#8a8a8a"/><polygon transform="translate(18,0)" points="4.50,0.40 5.98,2.86 8.78,3.51 6.90,5.68 7.15,8.54 4.50,7.42 1.85,8.54 2.10,5.68 0.22,3.51 3.02,2.86" fill="#8a8a8a"/><polygon transform="translate(27,0)" points="4.50,0.40 5.98,2.86 8.78,3.51 6.90,5.68 7.15,8.54 4.50,7.42 1.85,8.54 2.10,5.68 0.22,3.51 3.02,2.86" fill="#8a8a8a"/><polygon transform="translate(36,0)" points="4.50,0.40 5.98,2.86 8.78,3.51 6.90,5.68 7.15,8.54 4.50,7.42 1.85,8.54 2.10,5.68 0.22,3.51 3.02,2.86" fill="#8a8a8a"/></svg>
<div style="left:41px;top:504px;width:175px;height:91px;background:#4e4e4e"></div>
<div style="left:38px;top:501px;width:175px;height:91px;background:#4a4a4a"></div>
<div style="left:39px;top:502px;width:12px;height:89px;background:#7a7a7a;background-image:repeating-linear-gradient(#7a7a7a 0 2px,#383838 2px 5px,#7a7a7a 5px 6px);background-size:6px 6px;background-repeat:repeat-y;background-position:3px 2px"></div>
<div style="left:52px;top:502px;width:160px;height:89px;overflow:hidden"><div style="left:0;top:0;width:100%;height:100%;background:linear-gradient(90deg,#6a707a 0%,#5e646e 12%,#7898d4 14%,#84a4dc 68%,#c49484 70%,#b88a7a 100%)"></div><div style="left:0px;top:0px;width:161px;height:89px;clip-path:polygon(28px 30px,30px 16px,42px 12px,60px 14px,80px 20px,95px 26px,95px 30px);background:linear-gradient(#a87868,#b0a48e)"></div><div style="left:120px;top:14px;width:12px;height:16px;background:#d8dce0"></div></div>
<svg style="left:259.5px;top:472.5px" width="45" height="10"><polygon transform="translate(0,0)" points="4.50,0.40 5.98,2.86 8.78,3.51 6.90,5.68 7.15,8.54 4.50,7.42 1.85,8.54 2.10,5.68 0.22,3.51 3.02,2.86" fill="#8a8a8a"/><polygon transform="translate(9,0)" points="4.50,0.40 5.98,2.86 8.78,3.51 6.90,5.68 7.15,8.54 4.50,7.42 1.85,8.54 2.10,5.68 0.22,3.51 3.02,2.86" fill="#8a8a8a"/><polygon transform="translate(18,0)" points="4.50,0.40 5.98,2.86 8.78,3.51 6.90,5.68 7.15,8.54 4.50,7.42 1.85,8.54 2.10,5.68 0.22,3.51 3.02,2.86" fill="#8a8a8a"/><polygon transform="translate(27,0)" points="4.50,0.40 5.98,2.86 8.78,3.51 6.90,5.68 7.15,8.54 4.50,7.42 1.85,8.54 2.10,5.68 0.22,3.51 3.02,2.86" fill="#8a8a8a"/><polygon transform="translate(36,0)" points="4.50,0.40 5.98,2.86 8.78,3.51 6.90,5.68 7.15,8.54 4.50,7.42 1.85,8.54 2.10,5.68 0.22,3.51 3.02,2.86" fill="#8a8a8a"/></svg>
<div style="left:262px;top:504px;width:175px;height:91px;background:#4e4e4e"></div>
<div style="left:259px;top:501px;width:175px;height:91px;background:#4a4a4a"></div>
<div style="left:260px;top:502px;width:12px;height:89px;background:#7a7a7a;background-image:repeating-linear-gradient(#7a7a7a 0 2px,#383838 2px 5px,#7a7a7a 5px 6px);background-size:6px 6px;background-repeat:repeat-y;background-position:3px 2px"></div>
<div style="left:273px;top:502px;width:160px;height:89px;overflow:hidden"><div style="left:0;top:0;width:100%;height:100%;background:linear-gradient(90deg,#6e6252 0%,#8a7a66 30%,#6a5e50 48%,#c8c8d0 50%,#c0c4cc 60%,#a8c0e8 62%,#b0c8ec 88%,#8a8680 90%,#6a6660 100%)"></div></div>
<svg style="left:480.5px;top:472.5px" width="45" height="10"><polygon transform="translate(0,0)" points="4.50,0.40 5.98,2.86 8.78,3.51 6.90,5.68 7.15,8.54 4.50,7.42 1.85,8.54 2.10,5.68 0.22,3.51 3.02,2.86" fill="#8a8a8a"/><polygon transform="translate(9,0)" points="4.50,0.40 5.98,2.86 8.78,3.51 6.90,5.68 7.15,8.54 4.50,7.42 1.85,8.54 2.10,5.68 0.22,3.51 3.02,2.86" fill="#8a8a8a"/><polygon transform="translate(18,0)" points="4.50,0.40 5.98,2.86 8.78,3.51 6.90,5.68 7.15,8.54 4.50,7.42 1.85,8.54 2.10,5.68 0.22,3.51 3.02,2.86" fill="#8a8a8a"/><polygon transform="translate(27,0)" points="4.50,0.40 5.98,2.86 8.78,3.51 6.90,5.68 7.15,8.54 4.50,7.42 1.85,8.54 2.10,5.68 0.22,3.51 3.02,2.86" fill="#8a8a8a"/><polygon transform="translate(36,0)" points="4.50,0.40 5.98,2.86 8.78,3.51 6.90,5.68 7.15,8.54 4.50,7.42 1.85,8.54 2.10,5.68 0.22,3.51 3.02,2.86" fill="#8a8a8a"/></svg>
<div style="left:483px;top:504px;width:175px;height:91px;background:#4e4e4e"></div>
<div style="left:480px;top:501px;width:175px;height:91px;background:#4a4a4a"></div>
<div style="left:481px;top:502px;width:12px;height:89px;background:#7a7a7a;background-image:repeating-linear-gradient(#7a7a7a 0 2px,#383838 2px 5px,#7a7a7a 5px 6px);background-size:6px 6px;background-repeat:repeat-y;background-position:3px 2px"></div>
<div style="left:494px;top:502px;width:160px;height:89px;overflow:hidden"><div style="left:0;top:0;width:100%;height:100%;background:linear-gradient(90deg,#7a4a30 0%,#a86848 14%,#c89474 30%,#c89272 70%,#c08868 100%)"></div><div style="left:92px;top:5px;width:16px;height:22px;background:radial-gradient(ellipse,#fff4c8 20%,rgba(240,220,180,0) 70%)"></div><div style="left:20px;top:4px;width:130px;height:2px;background:rgba(230,200,170,.7)"></div></div>
<svg style="left:701.5px;top:472.5px" width="45" height="10"><polygon transform="translate(0,0)" points="4.50,0.40 5.98,2.86 8.78,3.51 6.90,5.68 7.15,8.54 4.50,7.42 1.85,8.54 2.10,5.68 0.22,3.51 3.02,2.86" fill="#8a8a8a"/><polygon transform="translate(9,0)" points="4.50,0.40 5.98,2.86 8.78,3.51 6.90,5.68 7.15,8.54 4.50,7.42 1.85,8.54 2.10,5.68 0.22,3.51 3.02,2.86" fill="#8a8a8a"/><polygon transform="translate(18,0)" points="4.50,0.40 5.98,2.86 8.78,3.51 6.90,5.68 7.15,8.54 4.50,7.42 1.85,8.54 2.10,5.68 0.22,3.51 3.02,2.86" fill="#8a8a8a"/><polygon transform="translate(27,0)" points="4.50,0.40 5.98,2.86 8.78,3.51 6.90,5.68 7.15,8.54 4.50,7.42 1.85,8.54 2.10,5.68 0.22,3.51 3.02,2.86" fill="#8a8a8a"/><polygon transform="translate(36,0)" points="4.50,0.40 5.98,2.86 8.78,3.51 6.90,5.68 7.15,8.54 4.50,7.42 1.85,8.54 2.10,5.68 0.22,3.51 3.02,2.86" fill="#8a8a8a"/></svg>
<div style="left:704px;top:504px;width:175px;height:91px;background:#4e4e4e"></div>
<div style="left:701px;top:501px;width:175px;height:91px;background:#4a4a4a"></div>
<div style="left:702px;top:502px;width:12px;height:89px;background:#7a7a7a;background-image:repeating-linear-gradient(#7a7a7a 0 2px,#383838 2px 5px,#7a7a7a 5px 6px);background-size:6px 6px;background-repeat:repeat-y;background-position:3px 2px"></div>
<div style="left:715px;top:502px;width:160px;height:89px;overflow:hidden"><div style="left:0;top:0;width:100%;height:100%;background:linear-gradient(90deg,#4e4640 0%,#6a5e54 25%,#5a524a 50%,#c4d4f0 53%,#c8d4ec 65%,#8a8680 66%)"></div><div style="left:105px;top:0px;width:56px;height:30px;background:linear-gradient(90deg,#8a8680,#b4b0a8 40%,#a8a49c)"></div></div>
<svg style="left:922.5px;top:472.5px" width="45" height="10"><polygon transform="translate(0,0)" points="4.50,0.40 5.98,2.86 8.78,3.51 6.90,5.68 7.15,8.54 4.50,7.42 1.85,8.54 2.10,5.68 0.22,3.51 3.02,2.86" fill="#8a8a8a"/><polygon transform="translate(9,0)" points="4.50,0.40 5.98,2.86 8.78,3.51 6.90,5.68 7.15,8.54 4.50,7.42 1.85,8.54 2.10,5.68 0.22,3.51 3.02,2.86" fill="#8a8a8a"/><polygon transform="translate(18,0)" points="4.50,0.40 5.98,2.86 8.78,3.51 6.90,5.68 7.15,8.54 4.50,7.42 1.85,8.54 2.10,5.68 0.22,3.51 3.02,2.86" fill="#8a8a8a"/><polygon transform="translate(27,0)" points="4.50,0.40 5.98,2.86 8.78,3.51 6.90,5.68 7.15,8.54 4.50,7.42 1.85,8.54 2.10,5.68 0.22,3.51 3.02,2.86" fill="#8a8a8a"/><polygon transform="translate(36,0)" points="4.50,0.40 5.98,2.86 8.78,3.51 6.90,5.68 7.15,8.54 4.50,7.42 1.85,8.54 2.10,5.68 0.22,3.51 3.02,2.86" fill="#8a8a8a"/></svg>
<div style="left:925px;top:504px;width:175px;height:91px;background:#4e4e4e"></div>
<div style="left:922px;top:501px;width:175px;height:91px;background:#4a4a4a"></div>
<div style="left:923px;top:502px;width:12px;height:89px;background:#7a7a7a;background-image:repeating-linear-gradient(#7a7a7a 0 2px,#383838 2px 5px,#7a7a7a 5px 6px);background-size:6px 6px;background-repeat:repeat-y;background-position:3px 2px"></div>
<div style="left:936px;top:502px;width:160px;height:89px;overflow:hidden"><div style="left:0;top:0;width:100%;height:100%;background:linear-gradient(90deg,#7898d4 0%,#82a2da 70%,#4a5a68 78%,#34424e 100%)"></div><div style="left:0px;top:0px;width:161px;height:89px;clip-path:polygon(55px 30px,85px 18px,118px 10px,135px 22px,135px 30px);background:linear-gradient(90deg,#a89088,#c05070 40%,#5070c0 60%,#d8a848 80%,#8a6a88)"></div><div style="left:125px;top:0px;width:36px;height:30px;background:#3a4856"></div></div>
<div style="left:62px;top:148px;width:124px;height:120px;background:#3e3e3e"></div>
<div style="left:59px;top:145px;width:134px;height:121px;background:#4a4a4a"></div>
<div style="left:60px;top:146px;width:12px;height:119px;background:#7a7a7a;background-image:repeating-linear-gradient(#7a7a7a 0 2px,#383838 2px 5px,#7a7a7a 5px 6px);background-size:6px 6px;background-repeat:repeat-y;background-position:3px 2px"></div>
<div style="left:72px;top:145px;width:121px;height:120px;overflow:hidden"><div style="left:0;top:0;width:100%;height:100%;background:radial-gradient(ellipse at 15% 10%,#80b0d8 0%,#5f90c0 45%,#42709e 100%)"></div><svg style="left:0;top:0" width="121" height="120" viewBox="0 0 121 120">
<path d="M32,52 V34 A18,18 0 0 1 68,34 V52" fill="none" stroke="#234c72" stroke-width="10"/>
<rect x="21" y="49" width="58" height="36" fill="#234c72"/>
<circle cx="50" cy="65" r="6" fill="#5b8cbb"/><rect x="47" y="65" width="6" height="13" rx="3" fill="#5b8cbb"/>
<rect x="57" y="78" width="37" height="27" rx="7" fill="#234c72" stroke="#6090c0" stroke-width="1.2"/>
<path d="M91,80 L101,72 L101,104 L91,100Z" fill="#234c72"/>
<rect x="53" y="84" width="5" height="11" rx="1" fill="#234c72"/>
<rect x="63" y="84" width="8" height="3" rx="1.5" fill="#4a7aa8"/><circle cx="76" cy="85.5" r="1.5" fill="#4a7aa8"/>
<rect x="50" y="96" width="20" height="19" rx="2" fill="#233a52"/><path d="M57,101 L65,106 L57,111Z" fill="#eee"/>
</svg></div>
<div style="left:262px;top:165px;width:175px;height:83px;background:#4e4e4e"></div>
<div style="left:259px;top:162px;width:175px;height:83px;background:#4a4a4a"></div>
<div style="left:260px;top:163px;width:12px;height:81px;background:#7a7a7a;background-image:repeating-linear-gradient(#7a7a7a 0 2px,#383838 2px 5px,#7a7a7a 5px 6px);background-size:6px 6px;background-repeat:repeat-y;background-position:3px 2px"></div>
<div style="left:273px;top:163px;width:160px;height:81px;overflow:hidden"><div style="left:0;top:0;width:100%;height:100%;background:linear-gradient(120deg,#3a66a8 0%,#2e5a98 9%,#4a5a3a 12%,#414f30 30%,#3d4a2c 55%,#465236 80%,#58604a 100%)"></div><div style="left:0px;top:0px;width:160px;height:81px;background:radial-gradient(circle at 30% 40%,rgba(110,110,80,.35),transparent 35%),radial-gradient(circle at 70% 70%,rgba(20,35,15,.45),transparent 40%),radial-gradient(circle at 55% 20%,rgba(120,120,90,.3),transparent 30%)"></div><div style="left:0px;top:0px;width:160px;height:81px;background-image:radial-gradient(circle,rgba(210,205,170,.22) 0.8px,transparent 1.2px),radial-gradient(circle,rgba(30,40,20,.25) 0.9px,transparent 1.3px);background-size:5px 4px,7px 6px;background-position:0 0,2px 3px"></div><div style="left:125px;top:21px;width:33px;height:2px;background:#e8e4d0"></div></div>
<div style="left:195px;top:164px;width:16px;height:16px;background:#5c5c5c;border-radius:2px"></div>
<svg style="left:198px;top:168px" width="11" height="8"><path d="M0,0 L4,0 L5,1.5 L11,1.5 L11,8 L0,8Z" fill="#e4e4e4"/></svg>
<div style="left:435px;top:164px;width:16px;height:16px;background:#5c5c5c;border-radius:2px"></div>
<svg style="left:438px;top:168px" width="11" height="8"><path d="M0,0 L4,0 L5,1.5 L11,1.5 L11,8 L0,8Z" fill="#e4e4e4"/></svg>
<div class="t" style="left:38px;top:280px;font-size:10.5px;font-weight:bold;color:#f4f4f4">googleearth 2016-12-30 11-11-36...</div>
<div class="t" style="left:259px;top:280px;font-size:10.5px;font-weight:bold;color:#f4f4f4">googleearth 2016-12-30 11-11-36...</div>
<svg style="left:89px;top:129px" width="14" height="11"><path d="M1,6 L5,10 L13,1" fill="none" stroke="#3cc43c" stroke-width="2.4"/></svg>
<svg style="left:108px;top:130px" width="9" height="11"><path d="M2,5 V3.5 Q2,1 4.5,1 Q7,1 7,3.5 V5" fill="none" stroke="#9a9a9a" stroke-width="1.4"/><rect x="0.5" y="5" width="8" height="6" fill="#9a9a9a"/></svg>
<div style="left:216px;top:131px;width:11px;height:11px;border-radius:6px;background:#cfcfcf;color:#4b4b4b;font-size:9px;font-weight:bold;text-align:center;line-height:11px;font-family:'Liberation Serif',serif">i</div>
<div style="left:5px;top:530px;width:1139px;height:30px;background:#333333;border-top:1px solid #2a2a2a"></div>
<svg style="left:15px;top:533px" width="22" height="25"><path d="M8.5,1.5 H20.5 V17" fill="none" stroke="#bdbdbd" stroke-width="1.2"/><path d="M6,4 H18 V20" fill="none" stroke="#bdbdbd" stroke-width="1.2"/><rect x="1" y="7" width="13" height="17" fill="#bdbdbd"/></svg>
<svg style="left:54px;top:540px" width="16" height="10"><g fill="#f39220"><rect x="0" y="0" width="4" height="4"/><rect x="6" y="0" width="4" height="4"/><rect x="12" y="0" width="4" height="4"/><rect x="0" y="6" width="4" height="4"/><rect x="6" y="6" width="4" height="4"/><rect x="12" y="6" width="4" height="4"/></g></svg>
<svg style="left:78px;top:542px" width="8" height="5"><path d="M0,0 L8,0 L4,5Z" fill="#bdbdbd"/></svg>
<svg style="left:97px;top:539px" width="16" height="11"><path d="M0,1 H15 M0,5.5 H15 M0,10 H15" stroke="#bdbdbd" stroke-width="1.2"/></svg>
<svg style="left:120px;top:542px" width="8" height="5"><path d="M0,0 L8,0 L4,5Z" fill="#bdbdbd"/></svg>
<div style="left:994px;top:540px;width:9px;height:9px;border:1.5px solid #bdbdbd"></div>
<div style="left:1008px;top:544px;width:110px;height:2px;background:#555"></div>
<div style="left:1050px;top:539px;width:11px;height:11px;border-radius:6px;background:radial-gradient(circle at 40% 35%,#e8e8e8,#9a9a9a)"></div>
<div style="left:1122px;top:538px;width:11px;height:11px;border:1.5px solid #bdbdbd"></div>
<div style="left:0px;top:560px;width:1152px;height:8px;background:#1b1b1b"></div>
<div style="left:1152px;top:54px;width:763px;height:25px;background:#333333"></div>
<div class="t" style="left:1162px;top:61px;font-size:12px;color:#d4d4d4">PortugalDébut.Movie.axp</div>
<div class="t" style="left:1642px;top:62px;font-size:12px;color:#d4d4d4;letter-spacing:1.2px">[ ] 00:01:33.08</div>
<div class="t" style="left:1749px;top:62px;font-size:12px;color:#d4d4d4">TC</div>
<div style="left:1770px;top:60px;width:84px;height:16px;background:#474747"></div>
<div class="t" style="left:1774px;top:63px;font-size:12px;color:#d8d8d8;letter-spacing:1.3px">00:00:37.27</div>
<svg style="left:1861px;top:61px" width="19" height="12"><path d="M10,0.7 H0.7 V11.3 H18.3 V7" fill="none" stroke="#d0d0d0" stroke-width="1.2"/><path d="M12,7 L17,2 M13.5,1 H18 V5.5" stroke="#d0d0d0" stroke-width="1.8" fill="none"/></svg>
<svg style="left:1891px;top:61px" width="19" height="12"><rect x="0.6" y="0.6" width="17.8" height="10.8" rx="1" fill="none" stroke="#d0d0d0" stroke-width="1.2"/><rect x="2.5" y="2.5" width="6" height="7" fill="#b8b8b8"/><rect x="10.5" y="2.5" width="6" height="7" fill="#b8b8b8"/></svg>
<div style="left:1152px;top:79px;width:763px;height:24px;background:#555555"></div>
<div style="left:1242px;top:79px;width:128px;height:24px;background:#6c6c6c;border-left:1px solid #5e5e5e"></div>
<div class="t" style="left:1177px;top:87px;font-size:12px;color:#d8d8d8">Source</div>
<div class="t" style="left:1259px;top:87px;font-size:12px;color:#f4f4f4">Plan de montage</div>
<div style="left:1152px;top:103px;width:763px;height:389px;background:#747474"></div>
<div style="left:1188px;top:105px;width:690px;height:387px;background:#000"></div>
<svg style="left:1440px;top:195px" width="185" height="205" viewBox="0 0 185 205">
<defs><filter id="bl" x="-10%" y="-10%" width="120%" height="120%"><feGaussianBlur stdDeviation="1.3"/></filter></defs>
<g filter="url(#bl)">
<path d="M43.6,106 V73 A48.2,48.2 0 0 1 140,73 V106" fill="none" stroke="#ff8a0c" stroke-width="24"/>
<rect x="14.4" y="105" width="154.6" height="88" fill="#ff8a0c"/>
<circle cx="91.5" cy="138" r="15.5" fill="#000"/><rect x="81.5" y="138" width="20" height="38" rx="10" fill="#000"/>
</g></svg>
<div style="left:1152px;top:492px;width:763px;height:23px;background:#2e2e2e"></div>
<div class="t" style="left:1158px;top:496px;font-size:9px;font-weight:bold;color:#ececec">:00.00</div>
<div style="left:1158.5px;top:506px;width:2px;height:8px;background:#7c7c7c"></div>
<div style="left:1198.7px;top:510px;width:2px;height:4px;background:#7c7c7c"></div>
<div class="t" style="left:1199.4px;top:496px;width:80px;text-align:center;font-size:9px;font-weight:bold;color:#ececec">00:00:10.00</div>
<div style="left:1238.9px;top:506px;width:2px;height:8px;background:#7c7c7c"></div>
<div style="left:1279.1px;top:510px;width:2px;height:4px;background:#7c7c7c"></div>
<div class="t" style="left:1279.8px;top:496px;width:80px;text-align:center;font-size:9px;font-weight:bold;color:#ececec">00:00:20.00</div>
<div style="left:1319.3px;top:506px;width:2px;height:8px;background:#7c7c7c"></div>
<div style="left:1359.5px;top:510px;width:2px;height:4px;background:#7c7c7c"></div>
<div class="t" style="left:1360.2px;top:496px;width:80px;text-align:center;font-size:9px;font-weight:bold;color:#ececec">00:00:30.00</div>
<div style="left:1399.7px;top:506px;width:2px;height:8px;background:#7c7c7c"></div>
<div style="left:1439.9px;top:510px;width:2px;height:4px;background:#7c7c7c"></div>
<div class="t" style="left:1440.6px;top:496px;width:80px;text-align:center;font-size:9px;font-weight:bold;color:#ececec">00:00:40.00</div>
<div style="left:1480.1px;top:506px;width:2px;height:8px;background:#7c7c7c"></div>
<div style="left:1520.3px;top:510px;width:2px;height:4px;background:#7c7c7c"></div>
<div class="t" style="left:1521.0px;top:496px;width:80px;text-align:center;font-size:9px;font-weight:bold;color:#ececec">00:00:50.00</div>
<div style="left:1560.5px;top:506px;width:2px;height:8px;background:#7c7c7c"></div>
<div style="left:1600.7px;top:510px;width:2px;height:4px;background:#7c7c7c"></div>
<div class="t" style="left:1601.4px;top:496px;width:80px;text-align:center;font-size:9px;font-weight:bold;color:#ececec">00:01:00.00</div>
<div style="left:1640.9px;top:506px;width:2px;height:8px;background:#7c7c7c"></div>
<div style="left:1681.1px;top:510px;width:2px;height:4px;background:#7c7c7c"></div>
<div class="t" style="left:1681.8px;top:496px;width:80px;text-align:center;font-size:9px;font-weight:bold;color:#ececec">00:01:10.00</div>
<div style="left:1721.3px;top:506px;width:2px;height:8px;background:#7c7c7c"></div>
<div style="left:1761.5px;top:510px;width:2px;height:4px;background:#7c7c7c"></div>
<div class="t" style="left:1762.2px;top:496px;width:80px;text-align:center;font-size:9px;font-weight:bold;color:#ececec">00:01:20.00</div>
<div style="left:1801.7px;top:506px;width:2px;height:8px;background:#7c7c7c"></div>
<div style="left:1841.9px;top:510px;width:2px;height:4px;background:#7c7c7c"></div>
<div class="t" style="left:1842.6px;top:496px;width:80px;text-align:center;font-size:9px;font-weight:bold;color:#ececec">00:01:30.00</div>
<div style="left:1882.1px;top:506px;width:2px;height:8px;background:#7c7c7c"></div>
<div style="left:1152px;top:515px;width:763px;height:15px;background:#6e6e6e"></div>
<div style="left:1158px;top:519px;width:752px;height:8px;background:#3a3a3a;border-radius:4px"></div>
<div style="left:1162px;top:520px;width:1px;height:6px;background:#aaa"></div>
<div style="left:1164px;top:520px;width:1px;height:6px;background:#aaa"></div>
<div style="left:1903px;top:520px;width:1px;height:6px;background:#aaa"></div>
<div style="left:1905px;top:520px;width:1px;height:6px;background:#aaa"></div>
<div style="left:1532px;top:522px;width:2px;height:2px;background:#cfcfcf"></div>
<div style="left:1452px;top:505px;width:17px;height:10px;border-radius:6px 6px 4px 4px;background:linear-gradient(#cfcfcf,#777)"></div>
<div style="left:1460px;top:507px;width:1px;height:22px;background:#c02828"></div>
<div style="left:1152px;top:530px;width:763px;height:30px;background:#3a3a3a"></div>
<svg style="left:1285px;top:537px" width="19" height="14"><path d="M6,4.5 H12 Q17.5,4.5 17.5,8.5 Q17.5,12.5 12,12.5 H6 Q1,12.5 1,8.5 Q1,5.5 4,4.8" fill="none" stroke="#bdbdbd" stroke-width="1.5"/><path d="M7,1 L12,4.5 L7,8Z" fill="#bdbdbd"/></svg>
<div style="left:1318px;top:541px;width:82px;height:8px;border-radius:3px;background:linear-gradient(90deg,#111 0%,rgba(0,0,0,0) 35%,rgba(0,0,0,0) 65%,#111 100%),repeating-linear-gradient(90deg,#1a1a1a 0 1px,#5a5a5a 1px 3px)"></div>
<div style="left:1357px;top:541px;width:3px;height:7px;background:#e8a050"></div>
<svg style="left:1410px;top:536px" width="240" height="18" viewBox="0 0 240 18">
<g fill="#c4c4c4">
<rect x="3" y="2" width="2" height="13"/><path d="M5,8.5 L13,2 V15Z"/><path d="M12,8.5 L20,2 V15Z"/>
<rect x="30" y="2" width="2" height="13"/><path d="M32,8.5 L42,2 V15Z"/>
<path d="M55,8.5 L64,2 V15Z"/><rect x="65" y="2" width="2" height="13"/>
<path d="M84,0 L98,8.5 L84,17Z"/>
<rect x="115" y="2" width="2" height="13"/><path d="M118,2 L127,8.5 L118,15Z"/>
<path d="M140,2 L150,8.5 L140,15Z"/><rect x="150" y="2" width="2" height="13"/>
<path d="M163,2 L171,8.5 L163,15Z"/><path d="M170,2 L178,8.5 L170,15Z"/><rect x="178" y="2" width="2" height="13"/>
<path d="M202,6 H206 L211,2 V15 L206,11 H202Z"/>
</g>
<path d="M213,5.5 Q215,8.5 213,11.5 M215.5,3.5 Q219,8.5 215.5,13.5" fill="none" stroke="#c4c4c4" stroke-width="1.2"/>
<path d="M220,7 L226,7 L223,10Z" fill="#c4c4c4"/>
</svg>
<div class="t" style="left:1840px;top:538px;font-size:13px;color:#bdbdbd">PiP</div>
<svg style="left:1868px;top:536px" width="17" height="17"><rect x="0.5" y="0.5" width="16" height="16" fill="none" stroke="#888" stroke-dasharray="2,1.5"/><rect x="1" y="10" width="6" height="6" fill="#999"/><path d="M5,12 L14,3 M9,3 H14 V8" fill="none" stroke="#ccc" stroke-width="1.5"/></svg>
<svg style="left:1893px;top:536px" width="17" height="17"><path d="M3,0 V14 H17 M0,3 H14 V17" fill="none" stroke="#bdbdbd" stroke-width="1.4"/><path d="M3,14 L14,3" stroke="#bdbdbd" stroke-width="1.4"/></svg>
<div style="left:5px;top:568px;width:1910px;height:28px;background:#3a3a3a"></div>
<div style="left:5px;top:596px;width:1910px;height:22px;background:#333333"></div>
<svg style="left:5px;top:567px" width="420" height="28" viewBox="0 0 420 28">
<rect x="8.5" y="7" width="16" height="13" rx="1.5" fill="none" stroke="#b4b4b4" stroke-width="1.3"/><rect x="8.5" y="7" width="16" height="3.5" fill="#b4b4b4"/>
<path d="M21,19 L27,19 L24,23Z" fill="#b4b4b4" stroke="#3a3a3a" stroke-width="0.8"/>
<polygon points="55.58,14.79 53.82,16.86 54.66,19.44 51.94,19.66 50.71,22.08 48.64,20.32 46.06,21.16 45.84,18.44 43.42,17.21 45.18,15.14 44.34,12.56 47.06,12.34 48.29,9.92 50.36,11.68 52.94,10.84 53.16,13.56" fill="#b4b4b4"/><circle cx="49.5" cy="16" r="1.8" fill="#3a3a3a"/><circle cx="56.5" cy="8.5" r="2.3" fill="none" stroke="#b4b4b4" stroke-width="1.4"/>
<rect x="79" y="15" width="11" height="3" fill="#b4b4b4"/><rect x="83" y="11" width="5" height="2.5" fill="#b4b4b4"/>
<path d="M94,12 L100,12 L97,15Z" fill="#b4b4b4"/>
<g fill="#b4b4b4"><rect x="157" y="11" width="1.8" height="9"/><rect x="160" y="13" width="1.8" height="7"/><rect x="163" y="10" width="1.8" height="10"/><rect x="166" y="12" width="1.8" height="8"/><rect x="169" y="15" width="1.8" height="5"/></g>
<path d="M204.5,4.5 Q208,7 204,11.5 Q198.5,16 199.5,19.5 Q201,23 205,22 Q208,20.5 206.5,17.5 Q204.5,15 202,17 Q200.5,18.5 202.5,20.5" fill="none" stroke="#b4b4b4" stroke-width="1.3"/><path d="M204.5,4.5 Q202.5,6 203.5,10 L204.5,24 Q204.5,26.5 202,26 Q200.5,25.5 201.5,24" fill="none" stroke="#b4b4b4" stroke-width="1.2"/>
<path d="M238.5,5.5 Q229,10 234,14.5 Q238.5,18 230.5,23.5 Q243,20 239,14.5 Q235,10 238.5,5.5Z" fill="#b4b4b4" stroke="#b4b4b4" stroke-width="0.8"/>
<path d="M258.5,7 H274.5 V11 H273 L272,9 H268 V20 L270,21 V22 H263 V21 L265,20 V9 H261 L260,11 H258.5Z" fill="#b4b4b4"/>
<rect x="297" y="6" width="6" height="10" rx="3" fill="#b4b4b4"/><path d="M295,13 Q295,19 300,19 Q305,19 305,13" fill="none" stroke="#b4b4b4" stroke-width="1.3"/><rect x="299.3" y="19" width="1.5" height="3" fill="#b4b4b4"/><rect x="296" y="21.5" width="8" height="1.5" fill="#b4b4b4"/>
<path d="M327,10 L330,10 L333,19 L338,19 L341,10 L344,10" fill="none" stroke="#b4b4b4" stroke-width="1.7"/>
<rect x="361.5" y="7.5" width="14" height="14" fill="none" stroke="#b4b4b4" stroke-width="1.2"/><rect x="363.5" y="9.5" width="4.5" height="4.5" fill="#b4b4b4"/><rect x="369" y="9.5" width="4.5" height="4.5" fill="#b4b4b4"/><rect x="363.5" y="15" width="4.5" height="4.5" fill="#b4b4b4"/><rect x="369" y="15" width="4.5" height="4.5" fill="#b4b4b4"/>
<circle cx="402" cy="14" r="7" fill="#b4b4b4"/><path d="M402,7 A7,7 0 0 1 402,21" fill="none"/><path d="M403,10 L406,8 M403,14 L408,10 M403,18 L408,14" stroke="#3a3a3a" stroke-width="1.3"/>
</svg>
<svg style="left:970px;top:568px" width="230" height="28" viewBox="0 0 230 28">
<path d="M7.5,6 H14 V21 L7.5,14Z" fill="#b4b4b4"/>
<path d="M41.5,6 H48 V14 L41.5,21Z" fill="#b4b4b4"/>
<path d="M72.5,6 H77 V19 H72.5Z M79,6 H83.5 V15 L79,19Z" fill="#b4b4b4"/><path d="M70.5,20.5 L87,6.5" stroke="#3a3a3a" stroke-width="2.6"/><path d="M70.5,20.5 L87,6.5" stroke="#b4b4b4" stroke-width="1.1"/>
<rect x="106" y="9" width="15" height="9" fill="#b4b4b4"/><rect x="106" y="11" width="15" height="1.3" fill="#3a3a3a"/><rect x="112.8" y="13.5" width="1.5" height="3" fill="#3a3a3a"/>
<rect x="141" y="9" width="11" height="13" fill="#b4b4b4"/><rect x="140" y="7" width="13" height="2" fill="#b4b4b4"/><rect x="144" y="5" width="5" height="2" fill="#b4b4b4"/><path d="M144,11 V20 M147,11 V20 M150,11 V20" stroke="#3a3a3a" stroke-width="1"/>
<rect x="173" y="9" width="17" height="11" rx="1" fill="#b4b4b4"/><circle cx="182" cy="14.5" r="3.5" fill="#3a3a3a"/><circle cx="182" cy="14.5" r="2" fill="#b4b4b4"/><rect x="175" y="7" width="4" height="2" fill="#b4b4b4"/>
<path d="M204,7 H213 V18 L208.5,22 L204,18Z" fill="#e85a2a"/>
<path d="M220,12 L226,12 L223,15Z" fill="#b4b4b4"/>
</svg>
<svg style="left:1745px;top:568px" width="170" height="28" viewBox="0 0 170 28">
<rect x="14.5" y="7" width="1.5" height="14" fill="#b4b4b4"/><path d="M7,12 H9.5 V9.5 L13.5,14 L9.5,18.5 V16 H7Z" fill="#b4b4b4"/><path d="M23,12 H20.5 V9.5 L16.5,14 L20.5,18.5 V16 H23Z" fill="#b4b4b4"/>
<path d="M41,8 H50 M47,5 L51,8 L47,11" fill="none" stroke="#b4b4b4" stroke-width="1.6"/><path d="M41,21 L56,10 V21Z" fill="#b4b4b4"/>
<path d="M90,8 H82 Q76,8 76,14 Q76,20 82,20 H90 V16 H83 Q81,16 81,14 Q81,12 83,12 H90Z" fill="#f08c1c"/><rect x="87" y="9" width="2" height="2" fill="#7a2a00"/><rect x="87" y="17" width="2" height="2" fill="#7a2a00"/>
<ellipse cx="113.5" cy="14" rx="5" ry="3.5" fill="#f08c1c"/><rect x="112" y="15" width="3" height="6" fill="#f08c1c"/><path d="M119,9 Q122,14 119,19 M122,8 Q126,14 122,20" fill="none" stroke="#f08c1c" stroke-width="1.3"/>
<path d="M141,8 H146 V12 H150.5 L143.5,19.5 L136.5,12 H141Z" fill="#f08c1c"/><path d="M151,17 L158,17 L154.5,21Z" fill="#f08c1c"/>
</svg>
<svg style="left:5px;top:596px" width="150" height="22" viewBox="0 0 150 22">
<rect x="5" y="10" width="8" height="8" fill="#b4b4b4"/><path d="M11,10 V7 Q11,4 14,4 Q17,4 17,7 V9" fill="none" stroke="#b4b4b4" stroke-width="1.3"/><rect x="8.3" y="12" width="1.4" height="3.5" fill="#333"/>
<rect x="29.5" y="8.5" width="16" height="9" fill="none" stroke="#b4b4b4" stroke-width="1.2"/><rect x="31" y="10" width="3" height="6" fill="#b4b4b4"/><rect x="34.5" y="10" width="10" height="6" fill="#6a6a6a"/><path d="M30,3 V8 M27.5,5.5 H32.5" stroke="#b4b4b4" stroke-width="1.3"/>
</svg>
<svg style="left:108px;top:601px" width="15" height="10"><path d="M0.3,5 Q7.5,-3 14.7,5 Q7.5,13 0.3,5Z" fill="#b4b4b4"/><circle cx="7.5" cy="4.6" r="3.3" fill="none" stroke="#3e3e3e" stroke-width="1.1"/><circle cx="7.5" cy="4.6" r="1.1" fill="#3e3e3e" fill-opacity=".6"/></svg>
<svg style="left:130px;top:601px" width="15" height="13"><path d="M0,4 H3 L8,0 V13 L3,9 H0Z" fill="#b4b4b4"/><path d="M10,3.5 Q12,6.5 10,9.5 M12,1.5 Q15.5,6.5 12,11.5" fill="none" stroke="#b4b4b4" stroke-width="1.1"/></svg>
<div style="left:5px;top:618px;width:150px;height:49px;background:linear-gradient(90deg,#474747 85%,#4a4a4a 100%)"></div>
<div style="left:155px;top:618px;width:1760px;height:49px;background:#4a4a4a"></div>
<div style="left:5px;top:667px;width:1910px;height:1px;background:#383838"></div>
<div style="left:154px;top:618px;width:1px;height:49px;background:#3c3c3c"></div>
<div style="left:26px;top:622px;width:1px;height:41px;background:#6e6e6e"></div>
<svg style="left:10px;top:627px" width="13" height="12"><rect x="0" y="5" width="8" height="7" fill="#8c8c8c"/><path d="M6,5 V3 Q6,0.7 9,0.7 Q12,0.7 12,3 V5" fill="none" stroke="#8c8c8c" stroke-width="1.2"/><rect x="3.3" y="7" width="1.4" height="3" fill="#4a4a4a"/></svg>
<div class="t" style="left:31px;top:639px;font-size:10px;color:#f2f2f2">Piste A/V (7)</div>
<svg style="left:108px;top:637px" width="15" height="10"><path d="M0.3,5 Q7.5,-3 14.7,5 Q7.5,13 0.3,5Z" fill="#8e8e8e"/><circle cx="7.5" cy="4.6" r="3.3" fill="none" stroke="#3e3e3e" stroke-width="1.1"/><circle cx="7.5" cy="4.6" r="1.1" fill="#3e3e3e" fill-opacity=".6"/></svg>
<svg style="left:130px;top:636px" width="15" height="13"><path d="M0,4 H3 L8,0 V13 L3,9 H0Z" fill="#8e8e8e"/><path d="M10,3.5 Q12,6.5 10,9.5 M12,1.5 Q15.5,6.5 12,11.5" fill="none" stroke="#8e8e8e" stroke-width="1.1"/></svg>
<div style="left:5px;top:668px;width:150px;height:49px;background:linear-gradient(90deg,#474747 85%,#4a4a4a 100%)"></div>
<div style="left:155px;top:668px;width:1760px;height:49px;background:#4a4a4a"></div>
<div style="left:5px;top:717px;width:1910px;height:1px;background:#383838"></div>
<div style="left:154px;top:668px;width:1px;height:49px;background:#3c3c3c"></div>
<div style="left:26px;top:672px;width:1px;height:41px;background:#6e6e6e"></div>
<svg style="left:10px;top:677px" width="13" height="12"><rect x="0" y="5" width="8" height="7" fill="#8c8c8c"/><path d="M6,5 V3 Q6,0.7 9,0.7 Q12,0.7 12,3 V5" fill="none" stroke="#8c8c8c" stroke-width="1.2"/><rect x="3.3" y="7" width="1.4" height="3" fill="#4a4a4a"/></svg>
<div class="t" style="left:31px;top:689px;font-size:10px;color:#f2f2f2">Piste A/V (6)</div>
<svg style="left:108px;top:687px" width="15" height="10"><path d="M0.3,5 Q7.5,-3 14.7,5 Q7.5,13 0.3,5Z" fill="#8e8e8e"/><circle cx="7.5" cy="4.6" r="3.3" fill="none" stroke="#3e3e3e" stroke-width="1.1"/><circle cx="7.5" cy="4.6" r="1.1" fill="#3e3e3e" fill-opacity=".6"/></svg>
<svg style="left:130px;top:686px" width="15" height="13"><path d="M0,4 H3 L8,0 V13 L3,9 H0Z" fill="#8e8e8e"/><path d="M10,3.5 Q12,6.5 10,9.5 M12,1.5 Q15.5,6.5 12,11.5" fill="none" stroke="#8e8e8e" stroke-width="1.1"/></svg>
<div style="left:5px;top:718px;width:150px;height:54px;background:linear-gradient(90deg,#5e5e5e 85%,#646464 100%)"></div>
<div style="left:155px;top:718px;width:1760px;height:54px;background:#636363"></div>
<div style="left:5px;top:772px;width:1910px;height:1px;background:#383838"></div>
<div style="left:154px;top:718px;width:1px;height:54px;background:#3c3c3c"></div>
<div style="left:5px;top:718px;width:2px;height:54px;background:#e8921e"></div>
<div style="left:26px;top:722px;width:1px;height:46px;background:#8e8e8e"></div>
<svg style="left:10px;top:729px" width="13" height="12"><rect x="0" y="5" width="8" height="7" fill="#8a8a8a"/><path d="M6,5 V3 Q6,0.7 9,0.7 Q12,0.7 12,3 V5" fill="none" stroke="#8c8c8c" stroke-width="1.2"/><rect x="3.3" y="7" width="1.4" height="3" fill="#4a4a4a"/></svg>
<div class="t" style="left:31px;top:742px;font-size:10px;color:#f2f2f2">Piste A/V (5)</div>
<svg style="left:108px;top:740px" width="15" height="10"><path d="M0.3,5 Q7.5,-3 14.7,5 Q7.5,13 0.3,5Z" fill="#8e8e8e"/><circle cx="7.5" cy="4.6" r="3.3" fill="none" stroke="#3e3e3e" stroke-width="1.1"/><circle cx="7.5" cy="4.6" r="1.1" fill="#3e3e3e" fill-opacity=".6"/></svg>
<svg style="left:130px;top:739px" width="15" height="13"><path d="M0,4 H3 L8,0 V13 L3,9 H0Z" fill="#8e8e8e"/><path d="M10,3.5 Q12,6.5 10,9.5 M12,1.5 Q15.5,6.5 12,11.5" fill="none" stroke="#8e8e8e" stroke-width="1.1"/></svg>
<div style="left:5px;top:773px;width:150px;height:49px;background:linear-gradient(90deg,#474747 85%,#4a4a4a 100%)"></div>
<div style="left:155px;top:773px;width:1760px;height:49px;background:#4a4a4a"></div>
<div style="left:5px;top:822px;width:1910px;height:1px;background:#383838"></div>
<div style="left:154px;top:773px;width:1px;height:49px;background:#3c3c3c"></div>
<div style="left:26px;top:777px;width:1px;height:41px;background:#6e6e6e"></div>
<svg style="left:10px;top:782px" width="13" height="12"><rect x="0" y="5" width="8" height="7" fill="#8c8c8c"/><path d="M6,5 V3 Q6,0.7 9,0.7 Q12,0.7 12,3 V5" fill="none" stroke="#8c8c8c" stroke-width="1.2"/><rect x="3.3" y="7" width="1.4" height="3" fill="#4a4a4a"/></svg>
<div class="t" style="left:31px;top:794px;font-size:10px;color:#f2f2f2">Piste A/V (1)</div>
<svg style="left:108px;top:792px" width="15" height="10"><path d="M0.3,5 Q7.5,-3 14.7,5 Q7.5,13 0.3,5Z" fill="#8e8e8e"/><circle cx="7.5" cy="4.6" r="3.3" fill="none" stroke="#3e3e3e" stroke-width="1.1"/><circle cx="7.5" cy="4.6" r="1.1" fill="#3e3e3e" fill-opacity=".6"/></svg>
<svg style="left:130px;top:791px" width="15" height="13"><path d="M0,4 H3 L8,0 V13 L3,9 H0Z" fill="#8e8e8e"/><path d="M10,3.5 Q12,6.5 10,9.5 M12,1.5 Q15.5,6.5 12,11.5" fill="none" stroke="#8e8e8e" stroke-width="1.1"/></svg>
<div style="left:5px;top:823px;width:150px;height:79px;background:linear-gradient(90deg,#474747 85%,#4a4a4a 100%)"></div>
<div style="left:155px;top:823px;width:1760px;height:79px;background:#4a4a4a"></div>
<div style="left:5px;top:902px;width:1910px;height:1px;background:#383838"></div>
<div style="left:154px;top:823px;width:1px;height:79px;background:#3c3c3c"></div>
<div style="left:26px;top:827px;width:1px;height:71px;background:#6e6e6e"></div>
<svg style="left:10px;top:848px" width="13" height="12"><rect x="0" y="5" width="8" height="7" fill="#8c8c8c"/><path d="M6,5 V3 Q6,0.7 9,0.7 Q12,0.7 12,3 V5" fill="none" stroke="#8c8c8c" stroke-width="1.2"/><rect x="3.3" y="7" width="1.4" height="3" fill="#4a4a4a"/></svg>
<div class="t" style="left:31px;top:861px;font-size:10px;color:#f2f2f2">Piste A/V (2)</div>
<svg style="left:108px;top:859px" width="15" height="10"><path d="M0.3,5 Q7.5,-3 14.7,5 Q7.5,13 0.3,5Z" fill="#8e8e8e"/><circle cx="7.5" cy="4.6" r="3.3" fill="none" stroke="#3e3e3e" stroke-width="1.1"/><circle cx="7.5" cy="4.6" r="1.1" fill="#3e3e3e" fill-opacity=".6"/></svg>
<svg style="left:130px;top:858px" width="15" height="13"><path d="M0,4 H3 L8,0 V13 L3,9 H0Z" fill="#8e8e8e"/><path d="M10,3.5 Q12,6.5 10,9.5 M12,1.5 Q15.5,6.5 12,11.5" fill="none" stroke="#8e8e8e" stroke-width="1.1"/></svg>
<div style="left:5px;top:903px;width:150px;height:49px;background:linear-gradient(90deg,#474747 85%,#4a4a4a 100%)"></div>
<div style="left:155px;top:903px;width:1760px;height:49px;background:#4a4a4a"></div>
<div style="left:5px;top:952px;width:1910px;height:1px;background:#383838"></div>
<div style="left:154px;top:903px;width:1px;height:49px;background:#3c3c3c"></div>
<div style="left:26px;top:907px;width:1px;height:41px;background:#6e6e6e"></div>
<svg style="left:10px;top:912px" width="13" height="12"><rect x="0" y="5" width="8" height="7" fill="#8c8c8c"/><path d="M6,5 V3 Q6,0.7 9,0.7 Q12,0.7 12,3 V5" fill="none" stroke="#8c8c8c" stroke-width="1.2"/><rect x="3.3" y="7" width="1.4" height="3" fill="#4a4a4a"/></svg>
<div class="t" style="left:31px;top:924px;font-size:10px;color:#f2f2f2">Piste A/V (3)</div>
<svg style="left:108px;top:922px" width="15" height="10"><path d="M0.3,5 Q7.5,-3 14.7,5 Q7.5,13 0.3,5Z" fill="#8e8e8e"/><circle cx="7.5" cy="4.6" r="3.3" fill="none" stroke="#3e3e3e" stroke-width="1.1"/><circle cx="7.5" cy="4.6" r="1.1" fill="#3e3e3e" fill-opacity=".6"/></svg>
<svg style="left:130px;top:921px" width="15" height="13"><path d="M0,4 H3 L8,0 V13 L3,9 H0Z" fill="#8e8e8e"/><path d="M10,3.5 Q12,6.5 10,9.5 M12,1.5 Q15.5,6.5 12,11.5" fill="none" stroke="#8e8e8e" stroke-width="1.1"/></svg>
<div style="left:5px;top:953px;width:150px;height:49px;background:linear-gradient(90deg,#474747 85%,#4a4a4a 100%)"></div>
<div style="left:155px;top:953px;width:1760px;height:49px;background:#4a4a4a"></div>
<div style="left:5px;top:1002px;width:1910px;height:1px;background:#383838"></div>
<div style="left:154px;top:953px;width:1px;height:49px;background:#3c3c3c"></div>
<div style="left:26px;top:957px;width:1px;height:41px;background:#6e6e6e"></div>
<svg style="left:10px;top:962px" width="13" height="12"><rect x="0" y="5" width="8" height="7" fill="#8c8c8c"/><path d="M6,5 V3 Q6,0.7 9,0.7 Q12,0.7 12,3 V5" fill="none" stroke="#8c8c8c" stroke-width="1.2"/><rect x="3.3" y="7" width="1.4" height="3" fill="#4a4a4a"/></svg>
<div class="t" style="left:31px;top:974px;font-size:10px;color:#f2f2f2">Piste A/V (4)</div>
<svg style="left:108px;top:972px" width="15" height="10"><path d="M0.3,5 Q7.5,-3 14.7,5 Q7.5,13 0.3,5Z" fill="#8e8e8e"/><circle cx="7.5" cy="4.6" r="3.3" fill="none" stroke="#3e3e3e" stroke-width="1.1"/><circle cx="7.5" cy="4.6" r="1.1" fill="#3e3e3e" fill-opacity=".6"/></svg>
<svg style="left:130px;top:971px" width="15" height="13"><path d="M0,4 H3 L8,0 V13 L3,9 H0Z" fill="#8e8e8e"/><path d="M10,3.5 Q12,6.5 10,9.5 M12,1.5 Q15.5,6.5 12,11.5" fill="none" stroke="#8e8e8e" stroke-width="1.1"/></svg>
<div style="left:203px;top:618px;width:31px;height:48px;background:#2a3a4a"></div>
<div style="left:204px;top:618px;width:29px;height:47px;background:linear-gradient(#4a82ba,#3b6b9e)"></div>
<div style="left:204px;top:618px;width:29px;height:26px;background:#000"></div>
<div style="left:204px;top:618px;width:29px;height:2px;background:#5cc85c"></div>
<div style="left:204px;top:620px;width:29px;height:3px;background:#e020d0"></div>
<div style="left:259px;top:618px;width:29px;height:48px;background:#2a3a4a"></div>
<div style="left:260px;top:618px;width:27px;height:47px;background:linear-gradient(#4a82ba,#3b6b9e)"></div>
<div style="left:260px;top:618px;width:27px;height:26px;background:#000"></div>
<div style="left:260px;top:618px;width:27px;height:2px;background:#5cc85c"></div>
<div style="left:260px;top:620px;width:27px;height:3px;background:#e020d0"></div>
<div style="left:302px;top:618px;width:29px;height:48px;background:#2a3a4a"></div>
<div style="left:303px;top:618px;width:27px;height:47px;background:linear-gradient(#4a82ba,#3b6b9e)"></div>
<div style="left:303px;top:618px;width:27px;height:26px;background:#000"></div>
<div style="left:303px;top:618px;width:27px;height:3px;background:#f020d8"></div>
<div style="left:343px;top:618px;width:29px;height:48px;background:#2a3a4a"></div>
<div style="left:344px;top:618px;width:27px;height:47px;background:linear-gradient(#4a82ba,#3b6b9e)"></div>
<div style="left:344px;top:618px;width:27px;height:26px;background:#000"></div>
<div style="left:344px;top:618px;width:27px;height:3px;background:#f020d8"></div>
<div style="left:180px;top:668px;width:30px;height:48px;background:#2a3a4a"></div>
<div style="left:181px;top:668px;width:28px;height:47px;background:linear-gradient(#4a82ba,#3b6b9e)"></div>
<div style="left:181px;top:668px;width:28px;height:26px;background:#000"></div>
<div style="left:181px;top:668px;width:28px;height:2px;background:#5cc85c"></div>
<div style="left:181px;top:670px;width:28px;height:3px;background:#e020d0"></div>
<div style="left:238px;top:668px;width:28px;height:48px;background:#2a3a4a"></div>
<div style="left:239px;top:668px;width:26px;height:47px;background:linear-gradient(#4a82ba,#3b6b9e)"></div>
<div style="left:239px;top:668px;width:26px;height:26px;background:#000"></div>
<div style="left:239px;top:668px;width:26px;height:2px;background:#5cc85c"></div>
<div style="left:239px;top:670px;width:26px;height:3px;background:#e020d0"></div>
<div style="left:289px;top:668px;width:29px;height:48px;background:#2a3a4a"></div>
<div style="left:290px;top:668px;width:27px;height:47px;background:linear-gradient(#4a82ba,#3b6b9e)"></div>
<div style="left:290px;top:668px;width:27px;height:26px;background:#000"></div>
<div style="left:290px;top:668px;width:27px;height:2px;background:#5cc85c"></div>
<div style="left:290px;top:670px;width:27px;height:3px;background:#e020d0"></div>
<div style="left:332px;top:668px;width:27px;height:48px;background:#2a3a4a"></div>
<div style="left:333px;top:668px;width:25px;height:47px;background:linear-gradient(#4a82ba,#3b6b9e)"></div>
<div style="left:333px;top:668px;width:25px;height:26px;background:#000"></div>
<div style="left:333px;top:668px;width:25px;height:2px;background:#5cc85c"></div>
<div style="left:333px;top:670px;width:25px;height:3px;background:#e020d0"></div>
<div style="left:373px;top:668px;width:32px;height:48px;background:#2a3a4a"></div>
<div style="left:374px;top:668px;width:30px;height:47px;background:linear-gradient(#4a82ba,#3b6b9e)"></div>
<div style="left:374px;top:668px;width:30px;height:26px;background:#000"></div>
<div style="left:374px;top:668px;width:30px;height:2px;background:#5cc85c"></div>
<div style="left:374px;top:670px;width:30px;height:3px;background:#e020d0"></div>
<div style="left:156px;top:718px;width:27px;height:53px;background:#2a3a4a"></div>
<div style="left:157px;top:718px;width:25px;height:52px;background:linear-gradient(#4a82ba,#3b6b9e)"></div>
<div style="left:157px;top:718px;width:25px;height:28px;background:#000"></div>
<div style="left:157px;top:718px;width:25px;height:2px;background:#5cc85c"></div>
<div style="left:157px;top:720px;width:25px;height:3px;background:#e020d0"></div>
<div style="left:212px;top:718px;width:30px;height:53px;background:#2a3a4a"></div>
<div style="left:213px;top:718px;width:28px;height:52px;background:linear-gradient(#4a82ba,#3b6b9e)"></div>
<div style="left:213px;top:718px;width:28px;height:28px;background:#000"></div>
<div style="left:213px;top:718px;width:28px;height:3px;background:#f020d8"></div>
<div style="left:268px;top:718px;width:25px;height:53px;background:#2a3a4a"></div>
<div style="left:269px;top:718px;width:23px;height:52px;background:linear-gradient(#4a82ba,#3b6b9e)"></div>
<div style="left:269px;top:718px;width:23px;height:28px;background:#000"></div>
<div style="left:269px;top:718px;width:23px;height:2px;background:#5cc85c"></div>
<div style="left:269px;top:720px;width:23px;height:3px;background:#e020d0"></div>
<div style="left:310px;top:718px;width:31px;height:53px;background:#2a3a4a"></div>
<div style="left:311px;top:718px;width:29px;height:52px;background:linear-gradient(#4a82ba,#3b6b9e)"></div>
<div style="left:311px;top:718px;width:29px;height:28px;background:#000"></div>
<div style="left:311px;top:718px;width:29px;height:3px;background:#f020d8"></div>
<div style="left:360px;top:718px;width:36px;height:53px;background:#2a3a4a"></div>
<div style="left:361px;top:718px;width:34px;height:52px;background:linear-gradient(#4a82ba,#3b6b9e)"></div>
<div style="left:361px;top:718px;width:34px;height:28px;background:#000"></div>
<div style="left:361px;top:718px;width:34px;height:2px;background:#5cc85c"></div>
<div style="left:361px;top:720px;width:34px;height:3px;background:#e020d0"></div>
<svg style="left:155px;top:772px" width="420" height="50" viewBox="0 0 420 50">
<path d="M2,24 L127,1.5 L137,24Z" fill="#8c8c8c"/><path d="M127,1.5 V24" stroke="#b0b0b0" stroke-width="1.2"/><path d="M2,24 L127,1.5" stroke="#b8b8b8" stroke-width="1"/>
<path d="M147,24 L413,1.5 L413,24Z" fill="#8c8c8c"/><path d="M147,24 L413,1.5" stroke="#b8b8b8" stroke-width="1"/>
</svg>
<div style="left:156px;top:796px;width:137px;height:25px;background:#2a3340"></div>
<div style="left:157px;top:797px;width:135px;height:23px;background:linear-gradient(#4a80b8,#3a6a9e)"></div>
<div style="left:301px;top:796px;width:268px;height:25px;background:#2a3340"></div>
<div style="left:302px;top:797px;width:266px;height:23px;background:linear-gradient(#4a80b8,#3a6a9e)"></div>
<div style="left:156px;top:823px;width:125px;height:79px;background:#2a3340"></div>
<div style="left:157px;top:824px;width:123px;height:77px;background:linear-gradient(#4a86c2,#3e72aa 60%,#3a6aa0)"></div>
<div style="left:283px;top:823px;width:286px;height:79px;background:#2a3340"></div>
<div style="left:284px;top:824px;width:284px;height:77px;background:linear-gradient(#4a86c2,#3e72aa 60%,#3a6aa0)"></div>
<svg style="left:157px;top:825px" width="70" height="39" viewBox="0 0 70 39"><rect width="70" height="39" fill="#ebe6d8"/>
<path d="M0,0 H28 Q30,8 24,14 Q14,20 8,19 L0,20Z" fill="#a8ccf4"/>
<path d="M70,14 Q60,16 52,22 Q44,26 38,34 L34,39 H70Z" fill="#a8ccf4"/>
<path d="M0,30 H3 V39 H0Z" fill="#a8ccf4"/>
<rect x="64" y="22" width="3" height="6" fill="#ebe6d8"/><rect x="60" y="30" width="2" height="4" fill="#ebe6d8"/>
<g fill="#c8d8a8" opacity=".8"><circle cx="40" cy="8" r="3"/><circle cx="55" cy="6" r="2.5"/><circle cx="20" cy="28" r="3"/><circle cx="48" cy="14" r="2"/></g>
<g stroke="#e8b050" stroke-width=".5" opacity=".6" fill="none"><path d="M10,25 L30,20 L45,10 M35,20 L30,35 M50,5 L62,12"/></g>
</svg>
<div class="t" style="left:230px;top:835px;font-size:10px;color:#fff">Portugal...</div>
<div style="left:284px;top:825px;width:70px;height:39px;background:#ebe6d8;background-image:radial-gradient(circle,rgba(200,160,100,.5) 0.7px,transparent 1px),radial-gradient(circle,rgba(150,190,130,.5) 0.7px,transparent 1px);background-size:6px 5px,8px 7px;background-position:0 0,3px 2px"></div>
<div class="t" style="left:357px;top:835px;font-size:10px;color:#fff">PortugalR1.jpg</div>
<div style="left:497px;top:825px;width:71px;height:39px;background:#ebe6d8;background-image:radial-gradient(circle,rgba(200,160,100,.5) 0.7px,transparent 1px),radial-gradient(circle,rgba(150,190,130,.5) 0.7px,transparent 1px);background-size:6px 5px,8px 7px;background-position:0 0,3px 2px"></div>
<div style="left:570px;top:823px;width:955px;height:79px;background:#2a3340"></div>
<div style="left:571px;top:824px;width:953px;height:77px;background:linear-gradient(#78aedc,#6a9ccc 50%,#5e8cbc 70%,#5a86b4)"></div>
<div style="left:571px;top:871px;width:953px;height:2px;background:#3a9a6a"></div>
<div style="left:571px;top:880px;width:953px;height:2px;background:#2020d8"></div>
<div style="left:571px;top:825px;width:70px;height:39px;background:#000"></div>
<svg style="left:598px;top:836px" width="17" height="18"><path d="M4,9 V6 Q4,1.5 8.5,1.5 Q13,1.5 13,6 V9" fill="none" stroke="#ff8a0c" stroke-width="2.6"/><rect x="1" y="8" width="15" height="10" fill="#ff8a0c"/><circle cx="8.5" cy="12" r="1.8" fill="#000"/><rect x="7.5" y="12" width="2" height="4" fill="#000"/></svg>
<div style="left:1454px;top:825px;width:70px;height:39px;background:#000"></div>
<svg style="left:1481px;top:836px" width="17" height="18"><path d="M4,9 V6 Q4,1.5 8.5,1.5 Q13,1.5 13,6 V9" fill="none" stroke="#ff8a0c" stroke-width="2.6"/><rect x="1" y="8" width="15" height="10" fill="#ff8a0c"/><circle cx="8.5" cy="12" r="1.8" fill="#000"/><rect x="7.5" y="12" width="2" height="4" fill="#000"/></svg>
<div class="t" style="left:644px;top:835px;font-size:10px;color:#fff">googleearth 2016-12-30 11-11-36-43.avi</div>
<div style="left:5px;top:1003px;width:1910px;height:69px;background:#303030"></div>
<div style="left:154px;top:1003px;width:1px;height:69px;background:#262626"></div>
<div style="left:155px;top:1036px;width:1760px;height:1px;background:#5a5a5a"></div>
<div style="left:156.0px;top:1036px;width:1.5px;height:8px;background:#8a8a8a"></div>
<div style="left:229.6px;top:1036px;width:1.5px;height:5px;background:#8a8a8a"></div>
<div class="t" style="left:156px;top:1046px;font-size:9px;font-weight:bold;color:#ececec">:00.00</div>
<div style="left:303.1px;top:1036px;width:1.5px;height:8px;background:#8a8a8a"></div>
<div style="left:376.8px;top:1036px;width:1.5px;height:5px;background:#8a8a8a"></div>
<div class="t" style="left:263.1px;top:1046px;width:80px;text-align:center;font-size:9px;font-weight:bold;color:#ececec">00:00:10.00</div>
<div style="left:450.3px;top:1036px;width:1.5px;height:8px;background:#8a8a8a"></div>
<div style="left:523.9px;top:1036px;width:1.5px;height:5px;background:#8a8a8a"></div>
<div class="t" style="left:410.3px;top:1046px;width:80px;text-align:center;font-size:9px;font-weight:bold;color:#ececec">00:00:20.00</div>
<div style="left:597.5px;top:1036px;width:1.5px;height:8px;background:#8a8a8a"></div>
<div style="left:671.1px;top:1036px;width:1.5px;height:5px;background:#8a8a8a"></div>
<div class="t" style="left:557.5px;top:1046px;width:80px;text-align:center;font-size:9px;font-weight:bold;color:#ececec">00:00:30.00</div>
<div style="left:744.6px;top:1036px;width:1.5px;height:8px;background:#8a8a8a"></div>
<div style="left:818.2px;top:1036px;width:1.5px;height:5px;background:#8a8a8a"></div>
<div class="t" style="left:704.6px;top:1046px;width:80px;text-align:center;font-size:9px;font-weight:bold;color:#ececec">00:00:40.00</div>
<div style="left:891.8px;top:1036px;width:1.5px;height:8px;background:#8a8a8a"></div>
<div style="left:965.4px;top:1036px;width:1.5px;height:5px;background:#8a8a8a"></div>
<div class="t" style="left:851.8px;top:1046px;width:80px;text-align:center;font-size:9px;font-weight:bold;color:#ececec">00:00:50.00</div>
<div style="left:1038.9px;top:1036px;width:1.5px;height:8px;background:#8a8a8a"></div>
<div style="left:1112.5px;top:1036px;width:1.5px;height:5px;background:#8a8a8a"></div>
<div class="t" style="left:998.9px;top:1046px;width:80px;text-align:center;font-size:9px;font-weight:bold;color:#ececec">00:01:00.00</div>
<div style="left:1186.0px;top:1036px;width:1.5px;height:8px;background:#8a8a8a"></div>
<div style="left:1259.6px;top:1036px;width:1.5px;height:5px;background:#8a8a8a"></div>
<div class="t" style="left:1146.0px;top:1046px;width:80px;text-align:center;font-size:9px;font-weight:bold;color:#ececec">00:01:10.00</div>
<div style="left:1333.2px;top:1036px;width:1.5px;height:8px;background:#8a8a8a"></div>
<div style="left:1406.8px;top:1036px;width:1.5px;height:5px;background:#8a8a8a"></div>
<div class="t" style="left:1293.2px;top:1046px;width:80px;text-align:center;font-size:9px;font-weight:bold;color:#ececec">00:01:20.00</div>
<div style="left:1480.4px;top:1036px;width:1.5px;height:8px;background:#8a8a8a"></div>
<div style="left:1554.0px;top:1036px;width:1.5px;height:5px;background:#8a8a8a"></div>
<div class="t" style="left:1440.4px;top:1046px;width:80px;text-align:center;font-size:9px;font-weight:bold;color:#ececec">00:01:30.00</div>
<div style="left:1627.5px;top:1036px;width:1.5px;height:8px;background:#8a8a8a"></div>
<div style="left:1701.1px;top:1036px;width:1.5px;height:5px;background:#8a8a8a"></div>
<div class="t" style="left:1587.5px;top:1046px;width:80px;text-align:center;font-size:9px;font-weight:bold;color:#ececec">00:01:40.00</div>
<div style="left:1774.7px;top:1036px;width:1.5px;height:8px;background:#8a8a8a"></div>
<div style="left:1848.2px;top:1036px;width:1.5px;height:5px;background:#8a8a8a"></div>
<div class="t" style="left:1734.7px;top:1046px;width:80px;text-align:center;font-size:9px;font-weight:bold;color:#ececec">00:01:50.00</div>
<div style="left:1921.8px;top:1036px;width:1.5px;height:8px;background:#8a8a8a"></div>
<div style="left:1995.4px;top:1036px;width:1.5px;height:5px;background:#8a8a8a"></div>
<div class="t" style="left:1881.8px;top:1046px;width:80px;text-align:center;font-size:9px;font-weight:bold;color:#ececec">00:02:00.00</div>
<div class="t" style="left:12px;top:1046px;font-size:9px;color:#e4e4e4">-60</div>
<div class="t" style="left:42px;top:1046px;font-size:9px;color:#e4e4e4">-22</div>
<div class="t" style="left:59px;top:1046px;font-size:9px;color:#e4e4e4">-16</div>
<div class="t" style="left:82px;top:1046px;font-size:9px;color:#e4e4e4">-10</div>
<div class="t" style="left:107px;top:1046px;font-size:9px;color:#e4e4e4">-6</div>
<div class="t" style="left:125px;top:1046px;font-size:9px;color:#e4e4e4">-3</div>
<div class="t" style="left:143px;top:1046px;font-size:9px;color:#e4e4e4">0</div>
<div style="left:18px;top:1055px;width:1px;height:3px;background:#bbb"></div>
<div style="left:48px;top:1055px;width:1px;height:3px;background:#bbb"></div>
<div style="left:65px;top:1055px;width:1px;height:3px;background:#bbb"></div>
<div style="left:88px;top:1055px;width:1px;height:3px;background:#bbb"></div>
<div style="left:111px;top:1055px;width:1px;height:3px;background:#bbb"></div>
<div style="left:128px;top:1055px;width:1px;height:3px;background:#bbb"></div>
<div style="left:145px;top:1055px;width:1px;height:3px;background:#bbb"></div>
<div style="left:8px;top:1059px;width:138px;height:4px;background:linear-gradient(90deg,#21981f 0,#21981f 68px,#a49c22 68px,#a49c22 120px,#b4661e 120px,#b4661e 135px,#c02222 135px);"></div>
<div style="left:8px;top:1059px;width:138px;height:4px;background:repeating-linear-gradient(90deg,transparent 0 3px,rgba(0,0,0,.12) 3px 4px)"></div>
<div style="left:8px;top:1064px;width:138px;height:4px;background:linear-gradient(90deg,#21981f 0,#21981f 68px,#a49c22 68px,#a49c22 120px,#b4661e 120px,#b4661e 135px,#c02222 135px);"></div>
<div style="left:8px;top:1064px;width:138px;height:4px;background:repeating-linear-gradient(90deg,transparent 0 3px,rgba(0,0,0,.12) 3px 4px)"></div>
<svg style="left:157px;top:1060px" width="6" height="8"><path d="M6,0 L0,4 L6,8Z" fill="#8a8a8a"/></svg>
<div style="left:165px;top:1059px;width:669px;height:9px;border-radius:4px;background:#7a7a7a"></div>
<div style="left:169px;top:1061px;width:1px;height:5px;background:#b0b0b0"></div>
<div style="left:171px;top:1061px;width:1px;height:5px;background:#b0b0b0"></div>
<div style="left:498px;top:1063px;width:2px;height:2px;background:#d0d0d0"></div>
<div style="left:827px;top:1061px;width:1px;height:5px;background:#b0b0b0"></div>
<div style="left:829px;top:1061px;width:1px;height:5px;background:#b0b0b0"></div>
<svg style="left:1895px;top:1061px" width="5" height="6"><path d="M0,0 L5,3 L0,6Z" fill="#7a7a7a"/></svg>
<div style="left:0px;top:1072px;width:1920px;height:8px;background:#1b1b1b"></div>
<div style="left:1915px;top:568px;width:5px;height:512px;background:#1b1b1b"></div>
<svg style="left:701px;top:607px" width="12" height="10"><path d="M0.5,0.5 L11.5,0.5 L6,9Z" fill="#9a9a9a" stroke="#c8c8c8" stroke-width="1"/></svg>
<div style="left:706px;top:616px;width:1px;height:424px;background:rgba(190,40,45,.85)"></div>
<div style="left:697px;top:1037px;width:19px;height:10px;border-radius:6px 6px 4px 4px;background:linear-gradient(#d4d4d4,#7a7a7a)"></div>
</body></html>
